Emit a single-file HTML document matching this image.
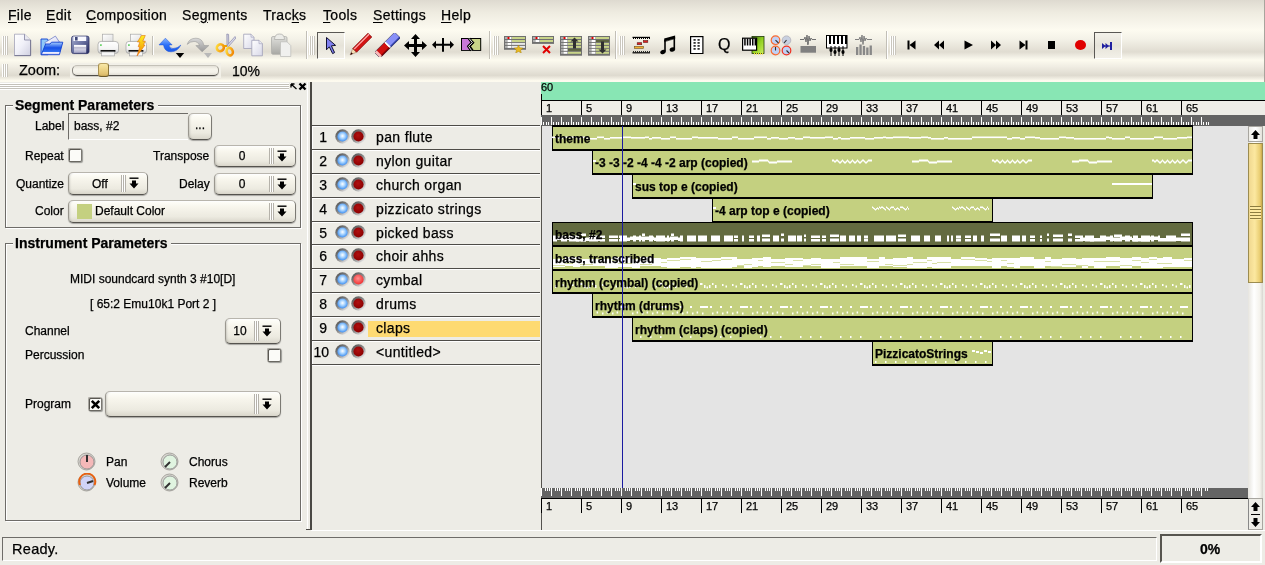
<!DOCTYPE html><html><head><meta charset="utf-8"><style>
*{box-sizing:border-box}
html,body{margin:0;padding:0}
body{width:1265px;height:565px;overflow:hidden;position:relative;background:#EDECE6;font-family:"Liberation Sans", sans-serif;color:#000}
.a{position:absolute}
.t{position:absolute;white-space:pre;line-height:1;will-change:transform;-webkit-text-stroke:0.25px currentColor}
.m{font-size:14px;letter-spacing:0.3px}
.u{text-decoration:underline;text-underline-offset:2px}
.lbl{font-size:12px}
.combo{position:absolute;border:1px solid;border-color:#B8B5AD #7C7A74 #55534E #9A978F;border-radius:5px;background:linear-gradient(#FFFFFA,#F7F5EC 30%,#ECEAE0 75%,#DAD7CC);box-shadow:0 1px 1px rgba(0,0,0,0.3), inset 2px 0 2px -1px rgba(0,0,0,0.15), inset 0 2px 1px -1px #FFF}
</style></head><body>

<div class="a" style="left:0;top:0;width:1265px;height:30px;background:linear-gradient(#DEDAD0,#EEEBE0 40%,#FAF8EE 90%,#FDFBF0)"></div>
<div class="a" style="left:0;top:30px;width:1265px;height:30px;background:linear-gradient(#FDFBF0,#F4F2E8 30%,#E0DCD1 73%,#F2F0E6 90%,#FDFBEF)"></div>
<div class="a" style="left:0;top:60px;width:1265px;height:22px;background:linear-gradient(#FDFBEF,#F0EDE3 30%,#DEDACF 70%,#F2EFE4 86%,#FFFCF0 95%,#FBF9EE)"></div>
<div class="a" style="left:1264px;top:0;width:1px;height:82px;background:#A8A59D"></div>
<div class="t m" style="left:8px;top:8px"><span class="u">F</span>ile</div>
<div class="t m" style="left:46px;top:8px"><span class="u">E</span>dit</div>
<div class="t m" style="left:86px;top:8px"><span class="u">C</span>omposition</div>
<div class="t m" style="left:182px;top:8px">Se<span class="u">g</span>ments</div>
<div class="t m" style="left:263px;top:8px">Trac<span class="u">k</span>s</div>
<div class="t m" style="left:323px;top:8px"><span class="u">T</span>ools</div>
<div class="t m" style="left:373px;top:8px"><span class="u">S</span>ettings</div>
<div class="t m" style="left:441px;top:8px"><span class="u">H</span>elp</div>
<div class="a" style="left:2px;top:36px;width:6px;height:19px;background:repeating-linear-gradient(90deg,#FFFFFF 0 1px,#C9C6BD 1px 2px)"></div>
<div class="a" style="left:309px;top:36px;width:6px;height:19px;background:repeating-linear-gradient(90deg,#FFFFFF 0 1px,#C9C6BD 1px 2px)"></div>
<div class="a" style="left:493px;top:36px;width:6px;height:19px;background:repeating-linear-gradient(90deg,#FFFFFF 0 1px,#C9C6BD 1px 2px)"></div>
<div class="a" style="left:619px;top:36px;width:6px;height:19px;background:repeating-linear-gradient(90deg,#FFFFFF 0 1px,#C9C6BD 1px 2px)"></div>
<div class="a" style="left:890px;top:36px;width:6px;height:19px;background:repeating-linear-gradient(90deg,#FFFFFF 0 1px,#C9C6BD 1px 2px)"></div>
<div class="a" style="left:2px;top:64px;width:6px;height:13px;background:repeating-linear-gradient(90deg,#FFFFFF 0 1px,#C9C6BD 1px 2px)"></div>
<div class="a" style="left:152px;top:36px;width:1px;height:19px;background:#C2BFB6"></div><div class="a" style="left:153px;top:36px;width:1px;height:19px;background:#FFFFFF"></div>
<div class="a" style="left:306px;top:31px;width:1px;height:28px;background:#C2BFB6"></div><div class="a" style="left:307px;top:31px;width:1px;height:28px;background:#FFFFFF"></div>
<div class="a" style="left:489px;top:31px;width:1px;height:28px;background:#C2BFB6"></div><div class="a" style="left:490px;top:31px;width:1px;height:28px;background:#FFFFFF"></div>
<div class="a" style="left:615px;top:31px;width:1px;height:28px;background:#C2BFB6"></div><div class="a" style="left:616px;top:31px;width:1px;height:28px;background:#FFFFFF"></div>
<div class="a" style="left:886px;top:31px;width:1px;height:28px;background:#C2BFB6"></div><div class="a" style="left:887px;top:31px;width:1px;height:28px;background:#FFFFFF"></div>
<svg class="a" style="left:13px;top:33px" width="19" height="24" viewBox="0 0 19 24"><defs><linearGradient id="gdoc" x1="0" y1="0" x2="1" y2="1"><stop offset="0" stop-color="#FFFFFF"/><stop offset="0.5" stop-color="#F0F0F8"/><stop offset="1" stop-color="#D0D0E0"/></linearGradient></defs><path d="M1.5 1.2 H11.5 L17.6 7 V22.6 H1.5 Z" fill="url(#gdoc)" stroke="#9898B0" stroke-width="0.7"/><path d="M17.6 7 V22.6 H1.5" fill="none" stroke="#70708C" stroke-width="0.9"/><path d="M11.5 1.2 V7 H17.6" fill="#E8E8F0" stroke="#8080A0" stroke-width="0.8"/></svg>
<svg class="a" style="left:40px;top:35px" width="24" height="21" viewBox="0 0 24 21"><defs><linearGradient id="gfo" x1="0" y1="0" x2="0" y2="1"><stop offset="0" stop-color="#A8D0FF"/><stop offset="0.45" stop-color="#1850E8"/><stop offset="0.75" stop-color="#3070F0"/><stop offset="0.8" stop-color="#F0F0FF"/><stop offset="1" stop-color="#C8C8F0"/></linearGradient><linearGradient id="gpp" x1="0" y1="0" x2="1" y2="1"><stop offset="0" stop-color="#FFFFFF"/><stop offset="1" stop-color="#D0D0F0"/></linearGradient></defs><path d="M1 4 H7.5 L8 5 V19.7 H1 Z" fill="#90C8F8" stroke="#1040D0" stroke-width="0.9"/><path d="M4.8 7.7 L15.4 1.1 L19.4 7 L9 13 Z" fill="url(#gpp)" stroke="#6070C0" stroke-width="0.7"/><path d="M1.3 19.7 L5.6 9 H10 L11.5 7.2 H22.8 L19.4 19.7 Z" fill="url(#gfo)" stroke="#1040D0" stroke-width="0.9"/></svg>
<svg class="a" style="left:71px;top:35px" width="19" height="20" viewBox="0 0 19 20"><defs><linearGradient id="gfl" x1="0" y1="0" x2="1" y2="1"><stop offset="0" stop-color="#A8B0D0"/><stop offset="0.5" stop-color="#6870A0"/><stop offset="1" stop-color="#20245A"/></linearGradient><linearGradient id="gfl2" x1="0" y1="0" x2="0" y2="1"><stop offset="0" stop-color="#FFFFFF"/><stop offset="1" stop-color="#A8A8C8"/></linearGradient></defs><rect x="0.6" y="1.1" width="17.4" height="17.5" rx="2" fill="url(#gfl)" stroke="#303468" stroke-width="0.8"/><rect x="2.4" y="1.5" width="12.8" height="4.5" fill="#F8F8FF"/><rect x="4" y="2" width="2.6" height="3.5" fill="#404878"/><rect x="3" y="9.9" width="12.2" height="7.9" fill="url(#gfl2)"/><rect x="3" y="12.5" width="12.2" height="0.8" fill="#9898B8"/></svg>
<svg class="a" style="left:97px;top:33px" width="23" height="24" viewBox="0 0 23 24"><defs><linearGradient id="gpr" x1="0" y1="0" x2="0" y2="1"><stop offset="0" stop-color="#FFFFFF"/><stop offset="0.6" stop-color="#F4F4F4"/><stop offset="1" stop-color="#C8C8C8"/></linearGradient><linearGradient id="gpa" x1="0" y1="0" x2="1" y2="1"><stop offset="0" stop-color="#FFFFFF"/><stop offset="1" stop-color="#E0E0E0"/></linearGradient></defs><rect x="5.6" y="1.2" width="10.4" height="7.6" fill="url(#gpa)" stroke="#A8A8A8" stroke-width="0.7"/><path d="M1 11.5 Q1 8.4 4 8.4 H18 Q21.5 8.4 21.5 11.5 V17.5 Q21.5 20.4 18.5 20.4 H4 Q1 20.4 1 17.5 Z" fill="url(#gpr)" stroke="#A0A0A0" stroke-width="0.7"/><rect x="3" y="11.3" width="1.8" height="1.6" fill="#60D060"/><rect x="3.4" y="17" width="15.2" height="1.9" rx="0.8" fill="#101010"/><rect x="4.6" y="18.9" width="13" height="4" fill="#F6F6F6" stroke="#A8A8A8" stroke-width="0.7"/></svg>
<svg class="a" style="left:125px;top:33px" width="23" height="24" viewBox="0 0 23 24"><defs><linearGradient id="gpr" x1="0" y1="0" x2="0" y2="1"><stop offset="0" stop-color="#FFFFFF"/><stop offset="0.6" stop-color="#F4F4F4"/><stop offset="1" stop-color="#C8C8C8"/></linearGradient><linearGradient id="gpa" x1="0" y1="0" x2="1" y2="1"><stop offset="0" stop-color="#FFFFFF"/><stop offset="1" stop-color="#E0E0E0"/></linearGradient></defs><rect x="5.6" y="1.2" width="10.4" height="7.6" fill="url(#gpa)" stroke="#A8A8A8" stroke-width="0.7"/><path d="M1 11.5 Q1 8.4 4 8.4 H18 Q21.5 8.4 21.5 11.5 V17.5 Q21.5 20.4 18.5 20.4 H4 Q1 20.4 1 17.5 Z" fill="url(#gpr)" stroke="#A0A0A0" stroke-width="0.7"/><rect x="3" y="11.3" width="1.8" height="1.6" fill="#60D060"/><rect x="3.4" y="17" width="15.2" height="1.9" rx="0.8" fill="#101010"/><rect x="4.6" y="18.9" width="13" height="4" fill="#F6F6F6" stroke="#A8A8A8" stroke-width="0.7"/></svg>
<svg class="a" style="left:136px;top:35px" width="10" height="22" viewBox="0 0 10 22"><defs><linearGradient id="glt" x1="0" y1="0" x2="0" y2="1"><stop offset="0" stop-color="#FFF020"/><stop offset="1" stop-color="#F08000"/></linearGradient></defs><path d="M5.5 0.5 H9.3 L6.8 6.2 H9.3 L7.4 10 H9 L1 21 L3.8 11.8 H2.2 L3.8 7 H1.4 Z" fill="url(#glt)" stroke="#E07010" stroke-width="0.6"/></svg>
<svg class="a" style="left:155px;top:32px" width="60" height="28" viewBox="0 0 60 28"><defs><linearGradient id="gu" x1="0" y1="0" x2="0" y2="1"><stop offset="0" stop-color="#8CB8FF"/><stop offset="0.5" stop-color="#2C70F8"/><stop offset="1" stop-color="#1858E8"/></linearGradient><linearGradient id="gr" x1="0" y1="0" x2="0" y2="1"><stop offset="0" stop-color="#D8D8D8"/><stop offset="1" stop-color="#989898"/></linearGradient></defs><path d="M4 12.9 L10.4 6.2 L17.1 12.9 H14 Q14.5 16.5 18 16.5 Q22.5 16.5 25.8 13.1 Q22.5 19.8 16 19.8 Q9.5 19.8 8.5 12.9 Z" fill="url(#gu)" stroke="#1A50D8" stroke-width="0.5"/><path d="M20.8 21 H29.2 L25 26 Z" fill="#000"/><path d="M32.2 12.4 Q34 6.2 41 6.2 Q47.5 6.2 49 13.6 H53.8 L47.1 19.8 L40.9 13.6 H44.5 Q43 9.5 39 9.5 Q35 9.5 32.2 12.4 Z" fill="url(#gr)" stroke="#909090" stroke-width="0.5"/><path d="M49 21 H57 L53 26 Z" fill="#B8B8B8"/></svg>
<svg class="a" style="left:212px;top:32px" width="24" height="25" viewBox="0 0 24 25"><defs><linearGradient id="gsc" x1="0" y1="0" x2="1" y2="1"><stop offset="0" stop-color="#FFE040"/><stop offset="1" stop-color="#F08000"/></linearGradient></defs><path d="M14.8 2 L16.6 2.4 L16.8 13.5 L15 14 Z" fill="#D0D0E0" stroke="#7878A0" stroke-width="0.6"/><path d="M23 4.5 L24 6 L16.5 14.5 L15 13.5 Z" fill="#D8D8E8" stroke="#7878A0" stroke-width="0.6"/><ellipse cx="8.3" cy="15.7" rx="3.6" ry="3.3" fill="none" stroke="url(#gsc)" stroke-width="2.6" transform="rotate(-30 8.3 15.7)"/><ellipse cx="17.7" cy="19.6" rx="3" ry="3.8" fill="none" stroke="url(#gsc)" stroke-width="2.6" transform="rotate(-20 17.7 19.6)"/><path d="M11 14 L15 14" stroke="#F0A000" stroke-width="2"/></svg>
<svg class="a" style="left:243px;top:33px" width="22" height="24" viewBox="0 0 22 24"><defs><linearGradient id="gcp" x1="0" y1="0" x2="1" y2="1"><stop offset="0" stop-color="#FFFFFF"/><stop offset="1" stop-color="#D8D8E8"/></linearGradient></defs><path d="M0.7 1.2 H8 L11 4.2 V15.5 H0.7 Z" fill="url(#gcp)" stroke="#A0A0B8" stroke-width="0.8"/><path d="M8.8 7.3 H16 L19.4 10.7 V22.8 H8.8 Z" fill="url(#gcp)" stroke="#A0A0B8" stroke-width="0.8"/><path d="M16 7.3 V10.7 H19.4" fill="#E8E8F0" stroke="#A0A0B8" stroke-width="0.6"/><path d="M8 1.2 V4.2 H11" fill="#E8E8F0" stroke="#A0A0B8" stroke-width="0.6"/></svg>
<svg class="a" style="left:271px;top:33px" width="22" height="24" viewBox="0 0 22 24"><defs><linearGradient id="gps" x1="0" y1="0" x2="0" y2="1"><stop offset="0" stop-color="#E0E0DC"/><stop offset="1" stop-color="#A8A8A4"/></linearGradient></defs><rect x="0.5" y="3.5" width="15.5" height="17.8" rx="1.5" fill="url(#gps)" stroke="#B0B0AC" stroke-width="0.8"/><path d="M3.5 6.5 Q3.5 1 8.5 1 Q13.5 1 13.5 6.5 Z" fill="#ECECE8" stroke="#B0B0AC" stroke-width="0.8"/><path d="M9.5 8.8 H16 L19.8 12.6 V23.5 H9.5 Z" fill="#F0F0EE" stroke="#C0C0BC" stroke-width="0.8"/></svg>
<div class="a" style="left:317px;top:32px;width:28px;height:27px;border:1px solid;border-color:#5A5854 #FFFFFF #FFFFFF #5A5854;background:linear-gradient(#F4F2EA,#E6E3D9 50%,#F2F0E8)"></div>
<svg class="a" style="left:325px;top:36px" width="12" height="19" viewBox="0 0 12 19"><path d="M1.5 1.5 V13.8 L4.3 10.8 L7.6 17.6 L9.6 16.6 L6.4 9.8 L10.6 9.4 Z" fill="#8080F0" stroke="#101030" stroke-width="1"/></svg>
<svg class="a" style="left:348px;top:33px" width="24" height="24" viewBox="0 0 24 24"><g transform="rotate(-45 12 12)"><path d="M-2 12 L4.5 9.3 V14.7 Z" fill="#F4DCB4" stroke="#806040" stroke-width="0.4"/><path d="M-2 12 L0.8 10.9 V13.1 Z" fill="#300000"/><rect x="4.5" y="9.3" width="21.5" height="5.4" fill="#D41414" stroke="#700000" stroke-width="0.6"/><rect x="5" y="10.2" width="21" height="1.2" fill="#FFB0B0"/></g></svg>
<svg class="a" style="left:375px;top:33px" width="25" height="24" viewBox="0 0 25 24"><g transform="rotate(-45 12.5 12)"><rect x="-2" y="8" width="3" height="8" fill="#F8B8B8"/><rect x="1" y="8" width="11" height="8" fill="#D01010"/><rect x="12" y="8" width="1.6" height="8" fill="#FFFFFF"/><rect x="13.6" y="8" width="13" height="8" fill="#8890F8"/><rect x="13.6" y="14.5" width="13" height="1.5" fill="#3040A8"/><rect x="1" y="14.5" width="11" height="1.5" fill="#800000"/><rect x="-2" y="8" width="28.6" height="8" fill="none" stroke="#202040" stroke-width="0.5"/></g></svg>
<svg class="a" style="left:404px;top:34px" width="23" height="23" viewBox="0 0 23 23"><path d="M11.5 0 L16 5 H13 V10 H18 V7 L23 11.5 L18 16 V13 H13 V18 H16 L11.5 23 L7 18 H10 V13 H5 V16 L0 11.5 L5 7 V10 H10 V5 H7 Z" fill="#000"/></svg>
<svg class="a" style="left:428px;top:33px" width="30" height="22" viewBox="0 0 30 22"><path d="M4 11.8 L8 7.8 V10.8 H14 V5 H16 V10.8 H22 V7.8 L26 11.8 L22 15.8 V12.8 H16 V18.8 H14 V12.8 H8 V15.8 Z" fill="#000"/></svg>
<svg class="a" style="left:460px;top:37px" width="23" height="16" viewBox="0 0 23 16"><path d="M1 1 H21.2 V13.9 H1 Z" fill="#000"/><path d="M2 2 H7.9 L10.9 5.6 L7.2 9.3 L10 12.9 H2 Z" fill="#C878D8"/><path d="M9.9 2 H20.2 V12.9 H13.6 L10.9 9.3 L14.6 5.6 Z" fill="#C8D488"/><path d="M9.1 1.5 L12.3 5.6 L8.6 9.3 L11.4 13.4" fill="none" stroke="#000" stroke-width="2.8"/><path d="M9.1 1.5 L12.3 5.6 L8.6 9.3 L11.4 13.4" fill="none" stroke="#FFF" stroke-width="0.9"/></svg>
<svg class="a" style="left:504px;top:36px" width="22" height="14" viewBox="0 0 22 14"><rect x="0" y="0" width="22" height="13.8" fill="#707070"/><rect x="1" y="1.0" width="2.5" height="2" fill="#B0B0B0"/><rect x="3.5" y="1.0" width="4" height="2" fill="#FFFFFF"/><rect x="8" y="1.0" width="13" height="2" fill="#C8D488"/><rect x="1" y="4.0" width="2.5" height="2" fill="#B0B0B0"/><rect x="3.5" y="4.0" width="4" height="2" fill="#FFFFFF"/><rect x="8" y="4.0" width="13" height="2" fill="#C8D488"/><rect x="1" y="6.9" width="2.5" height="2" fill="#B0B0B0"/><rect x="3.5" y="6.9" width="4" height="2" fill="#FFFFFF"/><rect x="8" y="6.9" width="13" height="2" fill="#E8E8E8"/><rect x="1" y="9.9" width="2.5" height="2" fill="#B0B0B0"/><rect x="3.5" y="9.9" width="4" height="2" fill="#FFFFFF"/><rect x="8" y="9.9" width="13" height="2" fill="#E8E8E8"/><rect x="3.5" y="1" width="2" height="2" fill="#E00000"/></svg>
<svg class="a" style="left:514px;top:45px" width="9" height="8" viewBox="0 0 9 8"><path d="M4.5 0 L5.8 2.8 L9 3.1 L6.6 5.1 L7.3 8 L4.5 6.5 L1.7 8 L2.4 5.1 L0 3.1 L3.2 2.8 Z" fill="#E8B820" stroke="#A07800" stroke-width="0.4"/></svg>
<svg class="a" style="left:532px;top:36px" width="22" height="8" viewBox="0 0 22 8"><rect x="0" y="0" width="22" height="7.9" fill="#707070"/><rect x="1" y="1.0" width="2.5" height="2" fill="#B0B0B0"/><rect x="3.5" y="1.0" width="4" height="2" fill="#FFFFFF"/><rect x="8" y="1.0" width="13" height="2" fill="#C8D488"/><rect x="1" y="4.0" width="2.5" height="2" fill="#B0B0B0"/><rect x="3.5" y="4.0" width="4" height="2" fill="#FFFFFF"/><rect x="8" y="4.0" width="13" height="2" fill="#C8D488"/><rect x="3.5" y="1" width="2" height="2" fill="#E00000"/></svg>
<svg class="a" style="left:542px;top:45px" width="9" height="9" viewBox="0 0 9 9"><path d="M1 1 L8 8 M8 1 L1 8" stroke="#E00000" stroke-width="2"/></svg>
<svg class="a" style="left:560px;top:36px" width="22" height="20" viewBox="0 0 22 20"><rect x="0" y="0" width="22" height="19.7" fill="#707070"/><rect x="1" y="1.0" width="2.5" height="2" fill="#B0B0B0"/><rect x="3.5" y="1.0" width="4" height="2" fill="#FFFFFF"/><rect x="8" y="1.0" width="13" height="2" fill="#C8D488"/><rect x="1" y="4.0" width="2.5" height="2" fill="#B0B0B0"/><rect x="3.5" y="4.0" width="4" height="2" fill="#FFFFFF"/><rect x="8" y="4.0" width="13" height="2" fill="#C8D488"/><rect x="1" y="6.9" width="2.5" height="2" fill="#B0B0B0"/><rect x="3.5" y="6.9" width="4" height="2" fill="#FFFFFF"/><rect x="8" y="6.9" width="13" height="2" fill="#C8D488"/><rect x="1" y="9.9" width="2.5" height="2" fill="#B0B0B0"/><rect x="3.5" y="9.9" width="4" height="2" fill="#FFFFFF"/><rect x="8" y="9.9" width="13" height="2" fill="#C8D488"/><rect x="1" y="12.8" width="2.5" height="2" fill="#B0B0B0"/><rect x="3.5" y="12.8" width="4" height="2" fill="#FFFFFF"/><rect x="8" y="12.8" width="13" height="2" fill="#5C6440"/><rect x="1" y="15.8" width="2.5" height="2" fill="#B0B0B0"/><rect x="3.5" y="15.8" width="4" height="2" fill="#FFFFFF"/><rect x="8" y="15.8" width="13" height="2" fill="#C8D488"/><rect x="3.5" y="1" width="2" height="2" fill="#E00000"/></svg>
<svg class="a" style="left:570px;top:37px" width="9" height="12" viewBox="0 0 9 12"><path d="M4.5 0.5 L8.5 4.5 H6 V11.5 H3 V4.5 H0.5 Z" fill="#303030"/></svg>
<svg class="a" style="left:588px;top:36px" width="22" height="20" viewBox="0 0 22 20"><rect x="0" y="0" width="22" height="19.7" fill="#707070"/><rect x="1" y="1.0" width="2.5" height="2" fill="#B0B0B0"/><rect x="3.5" y="1.0" width="4" height="2" fill="#FFFFFF"/><rect x="8" y="1.0" width="13" height="2" fill="#C8D488"/><rect x="1" y="4.0" width="2.5" height="2" fill="#B0B0B0"/><rect x="3.5" y="4.0" width="4" height="2" fill="#FFFFFF"/><rect x="8" y="4.0" width="13" height="2" fill="#5C6440"/><rect x="1" y="6.9" width="2.5" height="2" fill="#B0B0B0"/><rect x="3.5" y="6.9" width="4" height="2" fill="#FFFFFF"/><rect x="8" y="6.9" width="13" height="2" fill="#C8D488"/><rect x="1" y="9.9" width="2.5" height="2" fill="#B0B0B0"/><rect x="3.5" y="9.9" width="4" height="2" fill="#FFFFFF"/><rect x="8" y="9.9" width="13" height="2" fill="#C8D488"/><rect x="1" y="12.8" width="2.5" height="2" fill="#B0B0B0"/><rect x="3.5" y="12.8" width="4" height="2" fill="#FFFFFF"/><rect x="8" y="12.8" width="13" height="2" fill="#C8D488"/><rect x="1" y="15.8" width="2.5" height="2" fill="#B0B0B0"/><rect x="3.5" y="15.8" width="4" height="2" fill="#FFFFFF"/><rect x="8" y="15.8" width="13" height="2" fill="#C8D488"/><rect x="3.5" y="1" width="2" height="2" fill="#E00000"/></svg>
<svg class="a" style="left:598px;top:41px" width="9" height="13" viewBox="0 0 9 13"><path d="M4.5 12.5 L8.5 8.5 H6 V0.5 H3 V8.5 H0.5 Z" fill="#303030"/></svg>
<svg class="a" style="left:632px;top:36px" width="19" height="18" viewBox="0 0 19 18"><rect x="0.5" y="0.8" width="17.5" height="1.2" fill="#000"/><rect x="1" y="2" width="1" height="1" fill="#000"/><rect x="3" y="2" width="1" height="1" fill="#000"/><rect x="5" y="2" width="1" height="1" fill="#000"/><rect x="7" y="2" width="1" height="1" fill="#000"/><rect x="9" y="2" width="1" height="1" fill="#000"/><rect x="11" y="2" width="1" height="1" fill="#000"/><rect x="13" y="2" width="1" height="1" fill="#000"/><rect x="15" y="2" width="1" height="1" fill="#000"/><rect x="17" y="2" width="1" height="1" fill="#000"/><rect x="0.5" y="16.2" width="17.5" height="1.2" fill="#000"/><rect x="1" y="15.2" width="1" height="1" fill="#000"/><rect x="3" y="15.2" width="1" height="1" fill="#000"/><rect x="5" y="15.2" width="1" height="1" fill="#000"/><rect x="7" y="15.2" width="1" height="1" fill="#000"/><rect x="9" y="15.2" width="1" height="1" fill="#000"/><rect x="11" y="15.2" width="1" height="1" fill="#000"/><rect x="13" y="15.2" width="1" height="1" fill="#000"/><rect x="15" y="15.2" width="1" height="1" fill="#000"/><rect x="17" y="15.2" width="1" height="1" fill="#000"/><rect x="11.3" y="4.5" width="4.5" height="2" fill="#E02020" stroke="#602020" stroke-width="0.6"/><rect x="5.2" y="6.7" width="4.5" height="2" fill="#E02020" stroke="#602020" stroke-width="0.6"/><rect x="2.4" y="10.4" width="9.2" height="2" fill="#F0B030" stroke="#705020" stroke-width="0.6"/></svg>
<svg class="a" style="left:660px;top:35px" width="17" height="20" viewBox="0 0 17 20"><path d="M5 5 V16.5 M14.3 2 V14" stroke="#000" stroke-width="1.6"/><path d="M4.2 3.6 L15.1 0.4 V3.4 L4.2 6.6 Z" fill="#000"/><path d="M4.2 6.8 L15.1 3.6" stroke="#000" stroke-width="0.6"/><ellipse cx="3" cy="17" rx="2.8" ry="2.1" fill="#000" transform="rotate(-20 3 17)"/><ellipse cx="12.4" cy="14.5" rx="2.8" ry="2.1" fill="#000" transform="rotate(-20 12.4 14.5)"/></svg>
<svg class="a" style="left:690px;top:36px" width="14" height="18" viewBox="0 0 14 18"><rect x="0.6" y="0.6" width="12.3" height="17" fill="#FFF" stroke="#000" stroke-width="1.2"/><rect x="3.5" y="3" width="2.2" height="1.8" fill="#333"/><rect x="7.5" y="3" width="2.2" height="1.8" fill="#333"/><rect x="3.5" y="6" width="2.2" height="1.8" fill="#333"/><rect x="7.5" y="6" width="2.2" height="1.8" fill="#333"/><rect x="3.5" y="9" width="2.2" height="1.8" fill="#333"/><rect x="7.5" y="9" width="2.2" height="1.8" fill="#333"/><rect x="3.5" y="12" width="2.2" height="1.8" fill="#333"/><rect x="7.5" y="12" width="2.2" height="1.8" fill="#333"/></svg>
<div class="t" style="left:718px;top:37px;font-size:16px;font-weight:400">Q</div>
<svg class="a" style="left:742px;top:36px" width="23" height="19" viewBox="0 0 23 19"><defs><linearGradient id="gpb" x1="0" y1="0" x2="1" y2="1"><stop offset="0" stop-color="#407010"/><stop offset="0.5" stop-color="#90D020"/><stop offset="1" stop-color="#D0F060"/></linearGradient></defs><rect x="10" y="0.5" width="12" height="17" fill="url(#gpb)" stroke="#203808" stroke-width="0.8"/><rect x="0.6" y="2.2" width="14" height="12" fill="#FFF" stroke="#000" stroke-width="1.2"/><rect x="2.2" y="2.5" width="1.5" height="7" fill="#000"/><rect x="4.800000000000001" y="2.5" width="1.5" height="7" fill="#000"/><rect x="7.4" y="2.5" width="1.5" height="7" fill="#000"/><rect x="10.0" y="2.5" width="1.5" height="7" fill="#000"/><rect x="12.600000000000001" y="2.5" width="1.5" height="7" fill="#000"/><rect x="12" y="17" width="1" height="1.5" fill="#F0E020"/><rect x="14" y="17" width="1" height="1.5" fill="#F0E020"/><rect x="16" y="17" width="1" height="1.5" fill="#F0E020"/><rect x="18" y="17" width="1" height="1.5" fill="#F0E020"/><rect x="20" y="17" width="1" height="1.5" fill="#F0E020"/></svg>
<svg class="a" style="left:770px;top:35px" width="23" height="21" viewBox="0 0 23 21"><circle cx="5.5" cy="5.2" r="4.3" fill="#C0D0F4" stroke="#F86A30" stroke-width="1.2"/><circle cx="16.5" cy="5.2" r="4.3" fill="#C8D0E0" stroke="#B8B8C0" stroke-width="1"/><circle cx="5.5" cy="15.5" r="4.3" fill="#C0D0F4" stroke="#F86A30" stroke-width="1.2"/><circle cx="16.5" cy="15.5" r="4.3" fill="#C0D0F4" stroke="#F03020" stroke-width="1.2"/><path d="M5.5 5.2 L8.5 8 M16.5 5.2 L14 8 M5.5 15.5 L5.5 12 M16.5 15.5 L19 18" stroke="#303030" stroke-width="1.1"/></svg>
<svg class="a" style="left:800px;top:34px" width="17" height="20" viewBox="0 0 17 20"><path d="M0 5.5 H4 L5 3 L6 8 L7 1 L8 10.5 L9 2 L10 7 L11 4 L12 5.5 H16" fill="none" stroke="#707070" stroke-width="1"/><rect x="7.3" y="8" width="1" height="3" fill="#707070"/><rect x="0.5" y="12" width="15.5" height="6.7" fill="#808080"/></svg>
<svg class="a" style="left:826px;top:35px" width="22" height="21" viewBox="0 0 22 21"><rect x="0.5" y="0.5" width="20.5" height="12.5" fill="#FFF" stroke="#000"/><rect x="3" y="1" width="2" height="8" fill="#000"/><rect x="7" y="1" width="2" height="8" fill="#000"/><rect x="11" y="1" width="2" height="8" fill="#000"/><rect x="15" y="1" width="2" height="8" fill="#000"/><rect x="19" y="1" width="2" height="8" fill="#000"/><rect x="4.5" y="11" width="1" height="10" fill="#000"/><ellipse cx="5" cy="15" rx="1.6" ry="2" fill="#000"/><rect x="8.5" y="11" width="1" height="10" fill="#000"/><ellipse cx="9" cy="17" rx="1.6" ry="2" fill="#000"/><rect x="12.5" y="11" width="1" height="10" fill="#000"/><ellipse cx="13" cy="15" rx="1.6" ry="2" fill="#000"/><rect x="16.5" y="11" width="1" height="10" fill="#000"/><ellipse cx="17" cy="17" rx="1.6" ry="2" fill="#000"/></svg>
<svg class="a" style="left:855px;top:34px" width="18" height="22" viewBox="0 0 18 22"><path d="M0 5.5 H4 L5 3 L6 8 L7 1 L8 10.5 L9 2 L10 7 L11 4 L12 5.5 H17" fill="none" stroke="#808080" stroke-width="1"/><rect x="1.0" y="13" width="2.3" height="8" fill="#888"/><rect x="4.4" y="10.5" width="2.3" height="10.5" fill="#888"/><rect x="7.8" y="12" width="2.3" height="9" fill="#888"/><rect x="11.2" y="13.5" width="2.3" height="7.5" fill="#888"/><rect x="14.6" y="11.5" width="2.3" height="9.5" fill="#888"/></svg>
<svg class="a" style="left:907px;top:40px" width="9" height="10" viewBox="0 0 9 10"><rect x="0.5" y="0.5" width="2" height="9" fill="#000"/><path d="M8.5 0.5 V9.5 L2.5 5 Z" fill="#000"/></svg>
<svg class="a" style="left:934px;top:40px" width="10" height="10" viewBox="0 0 10 10"><path d="M5 0.5 V9.5 L0 5 Z M10 0.5 V9.5 L5 5 Z" fill="#000"/></svg>
<svg class="a" style="left:964px;top:40px" width="9" height="10" viewBox="0 0 9 10"><path d="M0.5 0.5 V9.5 L9 5 Z" fill="#000"/></svg>
<svg class="a" style="left:991px;top:40px" width="10" height="10" viewBox="0 0 10 10"><path d="M0 0.5 V9.5 L5 5 Z M5 0.5 V9.5 L10 5 Z" fill="#000"/></svg>
<svg class="a" style="left:1019px;top:40px" width="9" height="10" viewBox="0 0 9 10"><path d="M0.5 0.5 V9.5 L6.5 5 Z" fill="#000"/><rect x="6.5" y="0.5" width="2" height="9" fill="#000"/></svg>
<div class="a" style="left:1048px;top:41px;width:7px;height:8px;background:#000"></div>
<div class="a" style="left:1075px;top:40px;width:11px;height:10px;border-radius:50%;background:#E00000"></div>
<div class="a" style="left:1094px;top:32px;width:28px;height:27px;border:1px solid;border-color:#5A5854 #FFFFFF #FFFFFF #5A5854;background:linear-gradient(#F4F2EA,#E6E3D9 50%,#F2F0E8)"></div>
<svg class="a" style="left:1102px;top:42px" width="11" height="8" viewBox="0 0 11 8"><path d="M0 1 V7 L3.5 4 Z M3.5 1 V7 L7 4 Z" fill="#2020A0"/><rect x="0" y="3.5" width="8" height="1" fill="#2020A0"/><rect x="8" y="0" width="2" height="8" fill="#2020A0"/></svg>
<div class="t" style="left:19px;top:63px;font-size:14.5px">Zoom:</div>
<div class="a" style="left:70px;top:63px;width:151px;height:15px;background:#F2F0E8"></div>
<div class="a" style="left:72px;top:65px;width:147px;height:11px;border:1px solid;border-color:#C4C1B8 #9A978F #4E4C48 #8A8780;border-radius:5px;background:linear-gradient(#E4E1D8,#F6F4EC 35%,#F3F1E9 70%,#E0DDD4);box-shadow:0 1px 0 rgba(0,0,0,0.15)"></div>
<div class="a" style="left:98px;top:63px;width:11px;height:14px;border:1px solid;border-color:#B8A060 #8A7438 #6A5828 #A89050;border-radius:3px;background:linear-gradient(#F8E8A8,#EED68A 40%,#E0C070 85%,#C8A858)"></div>
<div class="t" style="left:232px;top:64px;font-size:14px">10%</div>
<div class="a" style="left:0;top:83px;width:289px;height:7px;background:repeating-linear-gradient(#FFFFFF 0 1px,#C4C1B9 1px 2px)"></div>
<svg class="a" style="left:290px;top:83px" width="8" height="7" viewBox="0 0 8 7"><path d="M1 1 H4.5 M1 1 V4.5 M1 1 L6.5 6" stroke="#000" stroke-width="1.3" fill="none"/></svg>
<svg class="a" style="left:298px;top:82px" width="9" height="9" viewBox="0 0 9 9"><path d="M1.5 1.5 L7.5 7.5 M7.5 1.5 L1.5 7.5" stroke="#000" stroke-width="2.4"/></svg>
<div class="a" style="left:307px;top:82px;width:1px;height:448px;background:#FFFFFF"></div>
<div class="a" style="left:310px;top:82px;width:2px;height:448px;background:#4A4844"></div>
<div class="a" style="left:306px;top:529px;width:5px;height:1px;background:#4A4844"></div>
<div class="a" style="left:5px;top:105px;width:296px;height:123px;border:1px solid #6E6C68;box-shadow:1px 1px 0 #FFFFFF, inset 1px 1px 0 #FFFFFF"></div>
<div class="a" style="left:13px;top:97px;width:145px;height:16px;background:#EDECE6"></div>
<div class="t" style="left:15px;top:98px;font-size:14px;font-weight:700">Segment Parameters</div>
<div class="a" style="left:5px;top:243px;width:296px;height:278px;border:1px solid #6E6C68;box-shadow:1px 1px 0 #FFFFFF, inset 1px 1px 0 #FFFFFF"></div>
<div class="a" style="left:13px;top:235px;width:158px;height:16px;background:#EDECE6"></div>
<div class="t" style="left:15px;top:236px;font-size:14px;font-weight:700">Instrument Parameters</div>
<div class="t lbl" style="left:35px;top:120px">Label</div>
<div class="a" style="left:68px;top:113px;width:120px;height:27px;border-left:1px solid #6E6C68;border-top:1px solid #6E6C68;border-bottom:1px solid #FFFFFF;background:#EDECE6"></div>
<div class="t lbl" style="left:74px;top:120px">bass, #2</div>
<div class="combo" style="left:188px;top:113px;width:24px;height:27px"></div>
<div class="t lbl" style="left:195px;top:119px">...</div>
<div class="t lbl" style="left:25px;top:150px">Repeat</div>
<div class="a" style="left:68px;top:148px;width:14px;height:14px;border:1px solid;border-color:#A8A6A0 #7A7872 #6A6862 #A8A6A0;border-radius:2px;background:#FBFBF8;box-shadow:1px 1px 1px rgba(0,0,0,0.35), inset 1px 1px 0 #5A5852"></div>
<div class="t lbl" style="left:153px;top:150px">Transpose</div>
<div class="combo" style="left:214px;top:145px;width:82px;height:22px"></div>
<div class="a" style="left:269px;top:148px;width:5px;height:16px;background:repeating-linear-gradient(90deg,#B5B2AA 0 1px,#FFF 1px 2px)"></div>
<svg class="a" style="left:277px;top:150px" width="10" height="12" viewBox="0 0 10 12"><rect x="0.5" y="0.5" width="9" height="1.4" fill="#000"/><path d="M5 11.5 L9.5 6.5 H7 V3.5 H3 V6.5 H0.5 Z" fill="#000"/></svg>
<div class="t lbl" style="left:214px;width:56px;text-align:center;top:150px">0</div>
<div class="t lbl" style="left:16px;top:178px">Quantize</div>
<div class="combo" style="left:68px;top:172px;width:80px;height:23px"></div>
<div class="a" style="left:121px;top:175px;width:5px;height:17px;background:repeating-linear-gradient(90deg,#B5B2AA 0 1px,#FFF 1px 2px)"></div>
<svg class="a" style="left:129px;top:177px" width="10" height="12" viewBox="0 0 10 12"><rect x="0.5" y="0.5" width="9" height="1.4" fill="#000"/><path d="M5 11.5 L9.5 6.5 H7 V3.5 H3 V6.5 H0.5 Z" fill="#000"/></svg>
<div class="t lbl" style="left:92px;top:178px">Off</div>
<div class="t lbl" style="left:179px;top:178px">Delay</div>
<div class="combo" style="left:214px;top:173px;width:82px;height:22px"></div>
<div class="a" style="left:269px;top:176px;width:5px;height:16px;background:repeating-linear-gradient(90deg,#B5B2AA 0 1px,#FFF 1px 2px)"></div>
<svg class="a" style="left:277px;top:178px" width="10" height="12" viewBox="0 0 10 12"><rect x="0.5" y="0.5" width="9" height="1.4" fill="#000"/><path d="M5 11.5 L9.5 6.5 H7 V3.5 H3 V6.5 H0.5 Z" fill="#000"/></svg>
<div class="t lbl" style="left:214px;width:56px;text-align:center;top:178px">0</div>
<div class="t lbl" style="left:35px;top:205px">Color</div>
<div class="combo" style="left:68px;top:200px;width:228px;height:23px"></div>
<div class="a" style="left:269px;top:203px;width:5px;height:17px;background:repeating-linear-gradient(90deg,#B5B2AA 0 1px,#FFF 1px 2px)"></div>
<svg class="a" style="left:277px;top:205px" width="10" height="12" viewBox="0 0 10 12"><rect x="0.5" y="0.5" width="9" height="1.4" fill="#000"/><path d="M5 11.5 L9.5 6.5 H7 V3.5 H3 V6.5 H0.5 Z" fill="#000"/></svg>
<div class="a" style="left:77px;top:204px;width:15px;height:15px;background:#C4D080"></div>
<div class="t lbl" style="left:95px;top:205px">Default Color</div>
<div class="t lbl" style="left:70px;top:273px">MIDI soundcard synth 3 #10[D]</div>
<div class="t lbl" style="left:90px;top:298px">[ 65:2 Emu10k1 Port 2 ]</div>
<div class="t lbl" style="left:25px;top:325px">Channel</div>
<div class="combo" style="left:225px;top:318px;width:56px;height:26px"></div>
<div class="a" style="left:254px;top:321px;width:5px;height:20px;background:repeating-linear-gradient(90deg,#B5B2AA 0 1px,#FFF 1px 2px)"></div>
<svg class="a" style="left:262px;top:325px" width="10" height="12" viewBox="0 0 10 12"><rect x="0.5" y="0.5" width="9" height="1.4" fill="#000"/><path d="M5 11.5 L9.5 6.5 H7 V3.5 H3 V6.5 H0.5 Z" fill="#000"/></svg>
<div class="t lbl" style="left:225px;width:30px;text-align:center;top:325px">10</div>
<div class="t lbl" style="left:25px;top:349px">Percussion</div>
<div class="a" style="left:267px;top:348px;width:14px;height:14px;border:1px solid;border-color:#A8A6A0 #7A7872 #6A6862 #A8A6A0;border-radius:2px;background:#FBFBF8;box-shadow:1px 1px 1px rgba(0,0,0,0.35), inset 1px 1px 0 #5A5852"></div>
<div class="t lbl" style="left:25px;top:398px">Program</div>
<div class="a" style="left:88px;top:397px;width:14px;height:14px;border:1px solid;border-color:#A8A6A0 #7A7872 #6A6862 #A8A6A0;border-radius:2px;background:#FBFBF8;box-shadow:1px 1px 1px rgba(0,0,0,0.35), inset 1px 1px 0 #5A5852"></div>
<svg class="a" style="left:90px;top:399px" width="11" height="11" viewBox="0 0 11 11"><path d="M1.8 1.8 L9.2 9.2 M9.2 1.8 L1.8 9.2" stroke="#000" stroke-width="2.6"/></svg>
<div class="combo" style="left:105px;top:391px;width:176px;height:26px"></div>
<div class="a" style="left:254px;top:394px;width:5px;height:20px;background:repeating-linear-gradient(90deg,#B5B2AA 0 1px,#FFF 1px 2px)"></div>
<svg class="a" style="left:262px;top:398px" width="10" height="12" viewBox="0 0 10 12"><rect x="0.5" y="0.5" width="9" height="1.4" fill="#000"/><path d="M5 11.5 L9.5 6.5 H7 V3.5 H3 V6.5 H0.5 Z" fill="#000"/></svg>
<svg class="a" style="left:77px;top:452px" width="20" height="19" viewBox="0 0 20 19"><circle cx="9.5" cy="9.5" r="8.5" fill="#D8D6D0" stroke="#A8A6A0" stroke-width="1"/><circle cx="10" cy="10" r="7" fill="#F4B8B8" stroke="#888" stroke-width="0.8"/><path d="M10 10 V3" stroke="#303030" stroke-width="2"/></svg>
<svg class="a" style="left:77px;top:473px" width="20" height="19" viewBox="0 0 20 19"><circle cx="9.5" cy="9.5" r="8.5" fill="#D8D6D0" stroke="#A8A6A0" stroke-width="1"/><circle cx="10" cy="10" r="7" fill="#D0D4F8" stroke="#888" stroke-width="0.8"/><path d="M3 12 A8 8 0 1 1 17.5 12" fill="none" stroke="#E86010" stroke-width="2"/><path d="M10 10 L16 8" stroke="#303030" stroke-width="2"/></svg>
<svg class="a" style="left:160px;top:452px" width="20" height="19" viewBox="0 0 20 19"><circle cx="9.5" cy="9.5" r="8.5" fill="#D8D6D0" stroke="#A8A6A0" stroke-width="1"/><circle cx="10" cy="10" r="7" fill="#E0F4E0" stroke="#888" stroke-width="0.8"/><path d="M10 10 L5 15" stroke="#303030" stroke-width="2"/></svg>
<svg class="a" style="left:160px;top:473px" width="20" height="19" viewBox="0 0 20 19"><circle cx="9.5" cy="9.5" r="8.5" fill="#D8D6D0" stroke="#A8A6A0" stroke-width="1"/><circle cx="10" cy="10" r="7" fill="#E0F4E0" stroke="#888" stroke-width="0.8"/><path d="M10 10 L5 15" stroke="#303030" stroke-width="2"/></svg>
<div class="t lbl" style="left:106px;top:456px">Pan</div>
<div class="t lbl" style="left:106px;top:477px">Volume</div>
<div class="t lbl" style="left:189px;top:456px">Chorus</div>
<div class="t lbl" style="left:189px;top:477px">Reverb</div>
<div class="a" style="left:312px;top:82px;width:229px;height:447px;background:#EDECE6"></div>
<div class="a" style="left:312px;top:125px;width:228px;height:1px;background:#4E4C48"></div>
<div class="a" style="left:312px;top:126px;width:228px;height:1px;background:#FFFFFF"></div>
<div class="a" style="left:312px;top:126px;width:1px;height:23px;background:#FFFFFF"></div>
<div class="t" style="left:313px;width:14px;text-align:right;top:130px;font-size:14px">1</div>
<svg class="a" style="left:335px;top:129px" width="32" height="15" viewBox="0 0 32 15"><defs><linearGradient id="rg0" x1="0.15" y1="0.1" x2="0.85" y2="0.9"><stop offset="0" stop-color="#5A5A5A"/><stop offset="0.5" stop-color="#8A8A8A"/><stop offset="1" stop-color="#E8E8E8"/></linearGradient><radialGradient id="bl0" cx="0.5" cy="0.45" r="0.55"><stop offset="0" stop-color="#FFFFFF"/><stop offset="0.45" stop-color="#A8D4FF"/><stop offset="1" stop-color="#3A8CF0"/></radialGradient><radialGradient id="rd0" cx="0.45" cy="0.4" r="0.6"><stop offset="0" stop-color="#B01010"/><stop offset="1" stop-color="#8A0000"/></radialGradient></defs><circle cx="7.5" cy="7.5" r="7.2" fill="url(#rg0)"/><circle cx="7.5" cy="7.5" r="5.1" fill="url(#bl0)"/><circle cx="23.5" cy="7.5" r="7.2" fill="url(#rg0)"/><circle cx="23.5" cy="7.5" r="5.1" fill="url(#rd0)"/></svg>
<div class="t" style="left:376px;top:130px;font-size:14px;letter-spacing:0.35px">pan flute</div>
<div class="a" style="left:312px;top:149px;width:228px;height:1px;background:#4E4C48"></div>
<div class="a" style="left:312px;top:150px;width:228px;height:1px;background:#FFFFFF"></div>
<div class="a" style="left:312px;top:150px;width:1px;height:23px;background:#FFFFFF"></div>
<div class="t" style="left:313px;width:14px;text-align:right;top:154px;font-size:14px">2</div>
<svg class="a" style="left:335px;top:153px" width="32" height="15" viewBox="0 0 32 15"><defs><linearGradient id="rg1" x1="0.15" y1="0.1" x2="0.85" y2="0.9"><stop offset="0" stop-color="#5A5A5A"/><stop offset="0.5" stop-color="#8A8A8A"/><stop offset="1" stop-color="#E8E8E8"/></linearGradient><radialGradient id="bl1" cx="0.5" cy="0.45" r="0.55"><stop offset="0" stop-color="#FFFFFF"/><stop offset="0.45" stop-color="#A8D4FF"/><stop offset="1" stop-color="#3A8CF0"/></radialGradient><radialGradient id="rd1" cx="0.45" cy="0.4" r="0.6"><stop offset="0" stop-color="#B01010"/><stop offset="1" stop-color="#8A0000"/></radialGradient></defs><circle cx="7.5" cy="7.5" r="7.2" fill="url(#rg1)"/><circle cx="7.5" cy="7.5" r="5.1" fill="url(#bl1)"/><circle cx="23.5" cy="7.5" r="7.2" fill="url(#rg1)"/><circle cx="23.5" cy="7.5" r="5.1" fill="url(#rd1)"/></svg>
<div class="t" style="left:376px;top:154px;font-size:14px;letter-spacing:0.35px">nylon guitar</div>
<div class="a" style="left:312px;top:173px;width:228px;height:1px;background:#4E4C48"></div>
<div class="a" style="left:312px;top:174px;width:228px;height:1px;background:#FFFFFF"></div>
<div class="a" style="left:312px;top:174px;width:1px;height:23px;background:#FFFFFF"></div>
<div class="t" style="left:313px;width:14px;text-align:right;top:178px;font-size:14px">3</div>
<svg class="a" style="left:335px;top:177px" width="32" height="15" viewBox="0 0 32 15"><defs><linearGradient id="rg2" x1="0.15" y1="0.1" x2="0.85" y2="0.9"><stop offset="0" stop-color="#5A5A5A"/><stop offset="0.5" stop-color="#8A8A8A"/><stop offset="1" stop-color="#E8E8E8"/></linearGradient><radialGradient id="bl2" cx="0.5" cy="0.45" r="0.55"><stop offset="0" stop-color="#FFFFFF"/><stop offset="0.45" stop-color="#A8D4FF"/><stop offset="1" stop-color="#3A8CF0"/></radialGradient><radialGradient id="rd2" cx="0.45" cy="0.4" r="0.6"><stop offset="0" stop-color="#B01010"/><stop offset="1" stop-color="#8A0000"/></radialGradient></defs><circle cx="7.5" cy="7.5" r="7.2" fill="url(#rg2)"/><circle cx="7.5" cy="7.5" r="5.1" fill="url(#bl2)"/><circle cx="23.5" cy="7.5" r="7.2" fill="url(#rg2)"/><circle cx="23.5" cy="7.5" r="5.1" fill="url(#rd2)"/></svg>
<div class="t" style="left:376px;top:178px;font-size:14px;letter-spacing:0.35px">church organ</div>
<div class="a" style="left:312px;top:197px;width:228px;height:1px;background:#4E4C48"></div>
<div class="a" style="left:312px;top:198px;width:228px;height:1px;background:#FFFFFF"></div>
<div class="a" style="left:312px;top:198px;width:1px;height:23px;background:#FFFFFF"></div>
<div class="t" style="left:313px;width:14px;text-align:right;top:202px;font-size:14px">4</div>
<svg class="a" style="left:335px;top:201px" width="32" height="15" viewBox="0 0 32 15"><defs><linearGradient id="rg3" x1="0.15" y1="0.1" x2="0.85" y2="0.9"><stop offset="0" stop-color="#5A5A5A"/><stop offset="0.5" stop-color="#8A8A8A"/><stop offset="1" stop-color="#E8E8E8"/></linearGradient><radialGradient id="bl3" cx="0.5" cy="0.45" r="0.55"><stop offset="0" stop-color="#FFFFFF"/><stop offset="0.45" stop-color="#A8D4FF"/><stop offset="1" stop-color="#3A8CF0"/></radialGradient><radialGradient id="rd3" cx="0.45" cy="0.4" r="0.6"><stop offset="0" stop-color="#B01010"/><stop offset="1" stop-color="#8A0000"/></radialGradient></defs><circle cx="7.5" cy="7.5" r="7.2" fill="url(#rg3)"/><circle cx="7.5" cy="7.5" r="5.1" fill="url(#bl3)"/><circle cx="23.5" cy="7.5" r="7.2" fill="url(#rg3)"/><circle cx="23.5" cy="7.5" r="5.1" fill="url(#rd3)"/></svg>
<div class="t" style="left:376px;top:202px;font-size:14px;letter-spacing:0.35px">pizzicato strings</div>
<div class="a" style="left:312px;top:221px;width:228px;height:1px;background:#4E4C48"></div>
<div class="a" style="left:312px;top:222px;width:228px;height:1px;background:#FFFFFF"></div>
<div class="a" style="left:312px;top:222px;width:1px;height:23px;background:#FFFFFF"></div>
<div class="t" style="left:313px;width:14px;text-align:right;top:226px;font-size:14px">5</div>
<svg class="a" style="left:335px;top:225px" width="32" height="15" viewBox="0 0 32 15"><defs><linearGradient id="rg4" x1="0.15" y1="0.1" x2="0.85" y2="0.9"><stop offset="0" stop-color="#5A5A5A"/><stop offset="0.5" stop-color="#8A8A8A"/><stop offset="1" stop-color="#E8E8E8"/></linearGradient><radialGradient id="bl4" cx="0.5" cy="0.45" r="0.55"><stop offset="0" stop-color="#FFFFFF"/><stop offset="0.45" stop-color="#A8D4FF"/><stop offset="1" stop-color="#3A8CF0"/></radialGradient><radialGradient id="rd4" cx="0.45" cy="0.4" r="0.6"><stop offset="0" stop-color="#B01010"/><stop offset="1" stop-color="#8A0000"/></radialGradient></defs><circle cx="7.5" cy="7.5" r="7.2" fill="url(#rg4)"/><circle cx="7.5" cy="7.5" r="5.1" fill="url(#bl4)"/><circle cx="23.5" cy="7.5" r="7.2" fill="url(#rg4)"/><circle cx="23.5" cy="7.5" r="5.1" fill="url(#rd4)"/></svg>
<div class="t" style="left:376px;top:226px;font-size:14px;letter-spacing:0.35px">picked bass</div>
<div class="a" style="left:312px;top:244px;width:228px;height:1px;background:#4E4C48"></div>
<div class="a" style="left:312px;top:245px;width:228px;height:1px;background:#FFFFFF"></div>
<div class="a" style="left:312px;top:245px;width:1px;height:23px;background:#FFFFFF"></div>
<div class="t" style="left:313px;width:14px;text-align:right;top:249px;font-size:14px">6</div>
<svg class="a" style="left:335px;top:248px" width="32" height="15" viewBox="0 0 32 15"><defs><linearGradient id="rg5" x1="0.15" y1="0.1" x2="0.85" y2="0.9"><stop offset="0" stop-color="#5A5A5A"/><stop offset="0.5" stop-color="#8A8A8A"/><stop offset="1" stop-color="#E8E8E8"/></linearGradient><radialGradient id="bl5" cx="0.5" cy="0.45" r="0.55"><stop offset="0" stop-color="#FFFFFF"/><stop offset="0.45" stop-color="#A8D4FF"/><stop offset="1" stop-color="#3A8CF0"/></radialGradient><radialGradient id="rd5" cx="0.45" cy="0.4" r="0.6"><stop offset="0" stop-color="#B01010"/><stop offset="1" stop-color="#8A0000"/></radialGradient></defs><circle cx="7.5" cy="7.5" r="7.2" fill="url(#rg5)"/><circle cx="7.5" cy="7.5" r="5.1" fill="url(#bl5)"/><circle cx="23.5" cy="7.5" r="7.2" fill="url(#rg5)"/><circle cx="23.5" cy="7.5" r="5.1" fill="url(#rd5)"/></svg>
<div class="t" style="left:376px;top:249px;font-size:14px;letter-spacing:0.35px">choir ahhs</div>
<div class="a" style="left:312px;top:268px;width:228px;height:1px;background:#4E4C48"></div>
<div class="a" style="left:312px;top:269px;width:228px;height:1px;background:#FFFFFF"></div>
<div class="a" style="left:312px;top:269px;width:1px;height:23px;background:#FFFFFF"></div>
<div class="t" style="left:313px;width:14px;text-align:right;top:273px;font-size:14px">7</div>
<svg class="a" style="left:335px;top:272px" width="32" height="15" viewBox="0 0 32 15"><defs><linearGradient id="rg6" x1="0.15" y1="0.1" x2="0.85" y2="0.9"><stop offset="0" stop-color="#5A5A5A"/><stop offset="0.5" stop-color="#8A8A8A"/><stop offset="1" stop-color="#E8E8E8"/></linearGradient><radialGradient id="bl6" cx="0.5" cy="0.45" r="0.55"><stop offset="0" stop-color="#FFFFFF"/><stop offset="0.45" stop-color="#A8D4FF"/><stop offset="1" stop-color="#3A8CF0"/></radialGradient><radialGradient id="rd6" cx="0.45" cy="0.4" r="0.6"><stop offset="0" stop-color="#FF9090"/><stop offset="1" stop-color="#F03030"/></radialGradient></defs><circle cx="7.5" cy="7.5" r="7.2" fill="url(#rg6)"/><circle cx="7.5" cy="7.5" r="5.1" fill="url(#bl6)"/><circle cx="23.5" cy="7.5" r="7.2" fill="url(#rg6)"/><circle cx="23.5" cy="7.5" r="5.1" fill="url(#rd6)"/></svg>
<div class="t" style="left:376px;top:273px;font-size:14px;letter-spacing:0.35px">cymbal</div>
<div class="a" style="left:312px;top:292px;width:228px;height:1px;background:#4E4C48"></div>
<div class="a" style="left:312px;top:293px;width:228px;height:1px;background:#FFFFFF"></div>
<div class="a" style="left:312px;top:293px;width:1px;height:23px;background:#FFFFFF"></div>
<div class="t" style="left:313px;width:14px;text-align:right;top:297px;font-size:14px">8</div>
<svg class="a" style="left:335px;top:296px" width="32" height="15" viewBox="0 0 32 15"><defs><linearGradient id="rg7" x1="0.15" y1="0.1" x2="0.85" y2="0.9"><stop offset="0" stop-color="#5A5A5A"/><stop offset="0.5" stop-color="#8A8A8A"/><stop offset="1" stop-color="#E8E8E8"/></linearGradient><radialGradient id="bl7" cx="0.5" cy="0.45" r="0.55"><stop offset="0" stop-color="#FFFFFF"/><stop offset="0.45" stop-color="#A8D4FF"/><stop offset="1" stop-color="#3A8CF0"/></radialGradient><radialGradient id="rd7" cx="0.45" cy="0.4" r="0.6"><stop offset="0" stop-color="#B01010"/><stop offset="1" stop-color="#8A0000"/></radialGradient></defs><circle cx="7.5" cy="7.5" r="7.2" fill="url(#rg7)"/><circle cx="7.5" cy="7.5" r="5.1" fill="url(#bl7)"/><circle cx="23.5" cy="7.5" r="7.2" fill="url(#rg7)"/><circle cx="23.5" cy="7.5" r="5.1" fill="url(#rd7)"/></svg>
<div class="t" style="left:376px;top:297px;font-size:14px;letter-spacing:0.35px">drums</div>
<div class="a" style="left:312px;top:316px;width:228px;height:1px;background:#4E4C48"></div>
<div class="a" style="left:312px;top:317px;width:228px;height:1px;background:#FFFFFF"></div>
<div class="a" style="left:312px;top:317px;width:1px;height:23px;background:#FFFFFF"></div>
<div class="t" style="left:313px;width:14px;text-align:right;top:321px;font-size:14px">9</div>
<svg class="a" style="left:335px;top:320px" width="32" height="15" viewBox="0 0 32 15"><defs><linearGradient id="rg8" x1="0.15" y1="0.1" x2="0.85" y2="0.9"><stop offset="0" stop-color="#5A5A5A"/><stop offset="0.5" stop-color="#8A8A8A"/><stop offset="1" stop-color="#E8E8E8"/></linearGradient><radialGradient id="bl8" cx="0.5" cy="0.45" r="0.55"><stop offset="0" stop-color="#FFFFFF"/><stop offset="0.45" stop-color="#A8D4FF"/><stop offset="1" stop-color="#3A8CF0"/></radialGradient><radialGradient id="rd8" cx="0.45" cy="0.4" r="0.6"><stop offset="0" stop-color="#B01010"/><stop offset="1" stop-color="#8A0000"/></radialGradient></defs><circle cx="7.5" cy="7.5" r="7.2" fill="url(#rg8)"/><circle cx="7.5" cy="7.5" r="5.1" fill="url(#bl8)"/><circle cx="23.5" cy="7.5" r="7.2" fill="url(#rg8)"/><circle cx="23.5" cy="7.5" r="5.1" fill="url(#rd8)"/></svg>
<div class="a" style="left:368px;top:321px;width:172px;height:16px;background:#FEDA72"></div>
<div class="t" style="left:376px;top:321px;font-size:14px;letter-spacing:0.35px">claps</div>
<div class="a" style="left:312px;top:340px;width:228px;height:1px;background:#4E4C48"></div>
<div class="a" style="left:312px;top:341px;width:228px;height:1px;background:#FFFFFF"></div>
<div class="a" style="left:312px;top:341px;width:1px;height:23px;background:#FFFFFF"></div>
<div class="t" style="left:313px;width:16px;text-align:right;top:345px;font-size:14px">10</div>
<svg class="a" style="left:335px;top:344px" width="32" height="15" viewBox="0 0 32 15"><defs><linearGradient id="rg9" x1="0.15" y1="0.1" x2="0.85" y2="0.9"><stop offset="0" stop-color="#5A5A5A"/><stop offset="0.5" stop-color="#8A8A8A"/><stop offset="1" stop-color="#E8E8E8"/></linearGradient><radialGradient id="bl9" cx="0.5" cy="0.45" r="0.55"><stop offset="0" stop-color="#FFFFFF"/><stop offset="0.45" stop-color="#A8D4FF"/><stop offset="1" stop-color="#3A8CF0"/></radialGradient><radialGradient id="rd9" cx="0.45" cy="0.4" r="0.6"><stop offset="0" stop-color="#B01010"/><stop offset="1" stop-color="#8A0000"/></radialGradient></defs><circle cx="7.5" cy="7.5" r="7.2" fill="url(#rg9)"/><circle cx="7.5" cy="7.5" r="5.1" fill="url(#bl9)"/><circle cx="23.5" cy="7.5" r="7.2" fill="url(#rg9)"/><circle cx="23.5" cy="7.5" r="5.1" fill="url(#rd9)"/></svg>
<div class="t" style="left:376px;top:345px;font-size:14px;letter-spacing:0.35px">&lt;untitled&gt;</div>
<div class="a" style="left:312px;top:364px;width:228px;height:1px;background:#4E4C48"></div>
<div class="a" style="left:312px;top:365px;width:228px;height:1px;background:#FFFFFF"></div>
<div class="a" style="left:541px;top:125px;width:1px;height:405px;background:#55534F"></div>
<div class="a" style="left:542px;top:126px;width:706px;height:362px;background:#E4E4E4"></div>
<div class="a" style="left:541px;top:82px;width:724px;height:18px;background:#88E6B4"></div>
<div class="t" style="left:541px;top:82px;font-size:11px">60</div>
<div class="a" style="left:541px;top:94px;width:1px;height:21px;background:#000"></div>
<div class="a" style="left:541px;top:100px;width:724px;height:1px;background:#000"></div>
<div class="a" style="left:542px;top:101px;width:723px;height:14px;background:#EEEDE7"></div>
<div class="a" style="left:541px;top:115px;width:724px;height:11px;background:#646464"></div>
<svg class="a" style="left:541px;top:115px" width="680" height="10" shape-rendering="crispEdges"><rect x="0" y="2" width="1" height="8" fill="#FFF"/><rect x="2" y="7" width="1" height="3" fill="#FFF"/><rect x="5" y="7" width="1" height="3" fill="#FFF"/><rect x="7" y="7" width="1" height="3" fill="#FFF"/><rect x="10" y="2" width="1" height="8" fill="#FFF"/><rect x="12" y="7" width="1" height="3" fill="#FFF"/><rect x="15" y="7" width="1" height="3" fill="#FFF"/><rect x="17" y="7" width="1" height="3" fill="#FFF"/><rect x="20" y="2" width="1" height="8" fill="#FFF"/><rect x="22" y="7" width="1" height="3" fill="#FFF"/><rect x="25" y="7" width="1" height="3" fill="#FFF"/><rect x="27" y="7" width="1" height="3" fill="#FFF"/><rect x="30" y="2" width="1" height="8" fill="#FFF"/><rect x="32" y="7" width="1" height="3" fill="#FFF"/><rect x="35" y="7" width="1" height="3" fill="#FFF"/><rect x="37" y="7" width="1" height="3" fill="#FFF"/><rect x="40" y="2" width="1" height="8" fill="#FFF"/><rect x="42" y="7" width="1" height="3" fill="#FFF"/><rect x="45" y="7" width="1" height="3" fill="#FFF"/><rect x="47" y="7" width="1" height="3" fill="#FFF"/><rect x="50" y="2" width="1" height="8" fill="#FFF"/><rect x="52" y="7" width="1" height="3" fill="#FFF"/><rect x="55" y="7" width="1" height="3" fill="#FFF"/><rect x="57" y="7" width="1" height="3" fill="#FFF"/><rect x="60" y="2" width="1" height="8" fill="#FFF"/><rect x="62" y="7" width="1" height="3" fill="#FFF"/><rect x="65" y="7" width="1" height="3" fill="#FFF"/><rect x="67" y="7" width="1" height="3" fill="#FFF"/><rect x="70" y="2" width="1" height="8" fill="#FFF"/><rect x="72" y="7" width="1" height="3" fill="#FFF"/><rect x="75" y="7" width="1" height="3" fill="#FFF"/><rect x="77" y="7" width="1" height="3" fill="#FFF"/><rect x="80" y="2" width="1" height="8" fill="#FFF"/><rect x="82" y="7" width="1" height="3" fill="#FFF"/><rect x="85" y="7" width="1" height="3" fill="#FFF"/><rect x="87" y="7" width="1" height="3" fill="#FFF"/><rect x="90" y="2" width="1" height="8" fill="#FFF"/><rect x="92" y="7" width="1" height="3" fill="#FFF"/><rect x="95" y="7" width="1" height="3" fill="#FFF"/><rect x="97" y="7" width="1" height="3" fill="#FFF"/><rect x="100" y="2" width="1" height="8" fill="#FFF"/><rect x="102" y="7" width="1" height="3" fill="#FFF"/><rect x="105" y="7" width="1" height="3" fill="#FFF"/><rect x="107" y="7" width="1" height="3" fill="#FFF"/><rect x="110" y="2" width="1" height="8" fill="#FFF"/><rect x="112" y="7" width="1" height="3" fill="#FFF"/><rect x="115" y="7" width="1" height="3" fill="#FFF"/><rect x="117" y="7" width="1" height="3" fill="#FFF"/><rect x="120" y="2" width="1" height="8" fill="#FFF"/><rect x="122" y="7" width="1" height="3" fill="#FFF"/><rect x="125" y="7" width="1" height="3" fill="#FFF"/><rect x="127" y="7" width="1" height="3" fill="#FFF"/><rect x="130" y="2" width="1" height="8" fill="#FFF"/><rect x="132" y="7" width="1" height="3" fill="#FFF"/><rect x="135" y="7" width="1" height="3" fill="#FFF"/><rect x="137" y="7" width="1" height="3" fill="#FFF"/><rect x="140" y="2" width="1" height="8" fill="#FFF"/><rect x="142" y="7" width="1" height="3" fill="#FFF"/><rect x="145" y="7" width="1" height="3" fill="#FFF"/><rect x="147" y="7" width="1" height="3" fill="#FFF"/><rect x="150" y="2" width="1" height="8" fill="#FFF"/><rect x="152" y="7" width="1" height="3" fill="#FFF"/><rect x="155" y="7" width="1" height="3" fill="#FFF"/><rect x="157" y="7" width="1" height="3" fill="#FFF"/><rect x="160" y="2" width="1" height="8" fill="#FFF"/><rect x="162" y="7" width="1" height="3" fill="#FFF"/><rect x="165" y="7" width="1" height="3" fill="#FFF"/><rect x="167" y="7" width="1" height="3" fill="#FFF"/><rect x="170" y="2" width="1" height="8" fill="#FFF"/><rect x="172" y="7" width="1" height="3" fill="#FFF"/><rect x="175" y="7" width="1" height="3" fill="#FFF"/><rect x="177" y="7" width="1" height="3" fill="#FFF"/><rect x="180" y="2" width="1" height="8" fill="#FFF"/><rect x="182" y="7" width="1" height="3" fill="#FFF"/><rect x="185" y="7" width="1" height="3" fill="#FFF"/><rect x="187" y="7" width="1" height="3" fill="#FFF"/><rect x="190" y="2" width="1" height="8" fill="#FFF"/><rect x="192" y="7" width="1" height="3" fill="#FFF"/><rect x="195" y="7" width="1" height="3" fill="#FFF"/><rect x="197" y="7" width="1" height="3" fill="#FFF"/><rect x="200" y="2" width="1" height="8" fill="#FFF"/><rect x="202" y="7" width="1" height="3" fill="#FFF"/><rect x="205" y="7" width="1" height="3" fill="#FFF"/><rect x="207" y="7" width="1" height="3" fill="#FFF"/><rect x="210" y="2" width="1" height="8" fill="#FFF"/><rect x="212" y="7" width="1" height="3" fill="#FFF"/><rect x="215" y="7" width="1" height="3" fill="#FFF"/><rect x="217" y="7" width="1" height="3" fill="#FFF"/><rect x="220" y="2" width="1" height="8" fill="#FFF"/><rect x="222" y="7" width="1" height="3" fill="#FFF"/><rect x="225" y="7" width="1" height="3" fill="#FFF"/><rect x="227" y="7" width="1" height="3" fill="#FFF"/><rect x="230" y="2" width="1" height="8" fill="#FFF"/><rect x="232" y="7" width="1" height="3" fill="#FFF"/><rect x="235" y="7" width="1" height="3" fill="#FFF"/><rect x="237" y="7" width="1" height="3" fill="#FFF"/><rect x="240" y="2" width="1" height="8" fill="#FFF"/><rect x="242" y="7" width="1" height="3" fill="#FFF"/><rect x="245" y="7" width="1" height="3" fill="#FFF"/><rect x="247" y="7" width="1" height="3" fill="#FFF"/><rect x="250" y="2" width="1" height="8" fill="#FFF"/><rect x="252" y="7" width="1" height="3" fill="#FFF"/><rect x="255" y="7" width="1" height="3" fill="#FFF"/><rect x="257" y="7" width="1" height="3" fill="#FFF"/><rect x="260" y="2" width="1" height="8" fill="#FFF"/><rect x="262" y="7" width="1" height="3" fill="#FFF"/><rect x="265" y="7" width="1" height="3" fill="#FFF"/><rect x="267" y="7" width="1" height="3" fill="#FFF"/><rect x="270" y="2" width="1" height="8" fill="#FFF"/><rect x="272" y="7" width="1" height="3" fill="#FFF"/><rect x="275" y="7" width="1" height="3" fill="#FFF"/><rect x="277" y="7" width="1" height="3" fill="#FFF"/><rect x="280" y="2" width="1" height="8" fill="#FFF"/><rect x="282" y="7" width="1" height="3" fill="#FFF"/><rect x="285" y="7" width="1" height="3" fill="#FFF"/><rect x="287" y="7" width="1" height="3" fill="#FFF"/><rect x="290" y="2" width="1" height="8" fill="#FFF"/><rect x="292" y="7" width="1" height="3" fill="#FFF"/><rect x="295" y="7" width="1" height="3" fill="#FFF"/><rect x="297" y="7" width="1" height="3" fill="#FFF"/><rect x="300" y="2" width="1" height="8" fill="#FFF"/><rect x="302" y="7" width="1" height="3" fill="#FFF"/><rect x="305" y="7" width="1" height="3" fill="#FFF"/><rect x="307" y="7" width="1" height="3" fill="#FFF"/><rect x="310" y="2" width="1" height="8" fill="#FFF"/><rect x="312" y="7" width="1" height="3" fill="#FFF"/><rect x="315" y="7" width="1" height="3" fill="#FFF"/><rect x="317" y="7" width="1" height="3" fill="#FFF"/><rect x="320" y="2" width="1" height="8" fill="#FFF"/><rect x="322" y="7" width="1" height="3" fill="#FFF"/><rect x="325" y="7" width="1" height="3" fill="#FFF"/><rect x="327" y="7" width="1" height="3" fill="#FFF"/><rect x="330" y="2" width="1" height="8" fill="#FFF"/><rect x="332" y="7" width="1" height="3" fill="#FFF"/><rect x="335" y="7" width="1" height="3" fill="#FFF"/><rect x="337" y="7" width="1" height="3" fill="#FFF"/><rect x="340" y="2" width="1" height="8" fill="#FFF"/><rect x="342" y="7" width="1" height="3" fill="#FFF"/><rect x="345" y="7" width="1" height="3" fill="#FFF"/><rect x="347" y="7" width="1" height="3" fill="#FFF"/><rect x="350" y="2" width="1" height="8" fill="#FFF"/><rect x="352" y="7" width="1" height="3" fill="#FFF"/><rect x="355" y="7" width="1" height="3" fill="#FFF"/><rect x="357" y="7" width="1" height="3" fill="#FFF"/><rect x="360" y="2" width="1" height="8" fill="#FFF"/><rect x="362" y="7" width="1" height="3" fill="#FFF"/><rect x="365" y="7" width="1" height="3" fill="#FFF"/><rect x="367" y="7" width="1" height="3" fill="#FFF"/><rect x="370" y="2" width="1" height="8" fill="#FFF"/><rect x="372" y="7" width="1" height="3" fill="#FFF"/><rect x="375" y="7" width="1" height="3" fill="#FFF"/><rect x="377" y="7" width="1" height="3" fill="#FFF"/><rect x="380" y="2" width="1" height="8" fill="#FFF"/><rect x="382" y="7" width="1" height="3" fill="#FFF"/><rect x="385" y="7" width="1" height="3" fill="#FFF"/><rect x="387" y="7" width="1" height="3" fill="#FFF"/><rect x="390" y="2" width="1" height="8" fill="#FFF"/><rect x="392" y="7" width="1" height="3" fill="#FFF"/><rect x="395" y="7" width="1" height="3" fill="#FFF"/><rect x="397" y="7" width="1" height="3" fill="#FFF"/><rect x="400" y="2" width="1" height="8" fill="#FFF"/><rect x="402" y="7" width="1" height="3" fill="#FFF"/><rect x="405" y="7" width="1" height="3" fill="#FFF"/><rect x="407" y="7" width="1" height="3" fill="#FFF"/><rect x="410" y="2" width="1" height="8" fill="#FFF"/><rect x="412" y="7" width="1" height="3" fill="#FFF"/><rect x="415" y="7" width="1" height="3" fill="#FFF"/><rect x="417" y="7" width="1" height="3" fill="#FFF"/><rect x="420" y="2" width="1" height="8" fill="#FFF"/><rect x="422" y="7" width="1" height="3" fill="#FFF"/><rect x="425" y="7" width="1" height="3" fill="#FFF"/><rect x="427" y="7" width="1" height="3" fill="#FFF"/><rect x="430" y="2" width="1" height="8" fill="#FFF"/><rect x="432" y="7" width="1" height="3" fill="#FFF"/><rect x="435" y="7" width="1" height="3" fill="#FFF"/><rect x="437" y="7" width="1" height="3" fill="#FFF"/><rect x="440" y="2" width="1" height="8" fill="#FFF"/><rect x="442" y="7" width="1" height="3" fill="#FFF"/><rect x="445" y="7" width="1" height="3" fill="#FFF"/><rect x="447" y="7" width="1" height="3" fill="#FFF"/><rect x="450" y="2" width="1" height="8" fill="#FFF"/><rect x="452" y="7" width="1" height="3" fill="#FFF"/><rect x="455" y="7" width="1" height="3" fill="#FFF"/><rect x="457" y="7" width="1" height="3" fill="#FFF"/><rect x="460" y="2" width="1" height="8" fill="#FFF"/><rect x="462" y="7" width="1" height="3" fill="#FFF"/><rect x="465" y="7" width="1" height="3" fill="#FFF"/><rect x="467" y="7" width="1" height="3" fill="#FFF"/><rect x="470" y="2" width="1" height="8" fill="#FFF"/><rect x="472" y="7" width="1" height="3" fill="#FFF"/><rect x="475" y="7" width="1" height="3" fill="#FFF"/><rect x="477" y="7" width="1" height="3" fill="#FFF"/><rect x="480" y="2" width="1" height="8" fill="#FFF"/><rect x="482" y="7" width="1" height="3" fill="#FFF"/><rect x="485" y="7" width="1" height="3" fill="#FFF"/><rect x="487" y="7" width="1" height="3" fill="#FFF"/><rect x="490" y="2" width="1" height="8" fill="#FFF"/><rect x="492" y="7" width="1" height="3" fill="#FFF"/><rect x="495" y="7" width="1" height="3" fill="#FFF"/><rect x="497" y="7" width="1" height="3" fill="#FFF"/><rect x="500" y="2" width="1" height="8" fill="#FFF"/><rect x="502" y="7" width="1" height="3" fill="#FFF"/><rect x="505" y="7" width="1" height="3" fill="#FFF"/><rect x="507" y="7" width="1" height="3" fill="#FFF"/><rect x="510" y="2" width="1" height="8" fill="#FFF"/><rect x="512" y="7" width="1" height="3" fill="#FFF"/><rect x="515" y="7" width="1" height="3" fill="#FFF"/><rect x="517" y="7" width="1" height="3" fill="#FFF"/><rect x="520" y="2" width="1" height="8" fill="#FFF"/><rect x="522" y="7" width="1" height="3" fill="#FFF"/><rect x="525" y="7" width="1" height="3" fill="#FFF"/><rect x="527" y="7" width="1" height="3" fill="#FFF"/><rect x="530" y="2" width="1" height="8" fill="#FFF"/><rect x="532" y="7" width="1" height="3" fill="#FFF"/><rect x="535" y="7" width="1" height="3" fill="#FFF"/><rect x="537" y="7" width="1" height="3" fill="#FFF"/><rect x="540" y="2" width="1" height="8" fill="#FFF"/><rect x="542" y="7" width="1" height="3" fill="#FFF"/><rect x="545" y="7" width="1" height="3" fill="#FFF"/><rect x="547" y="7" width="1" height="3" fill="#FFF"/><rect x="550" y="2" width="1" height="8" fill="#FFF"/><rect x="552" y="7" width="1" height="3" fill="#FFF"/><rect x="555" y="7" width="1" height="3" fill="#FFF"/><rect x="557" y="7" width="1" height="3" fill="#FFF"/><rect x="560" y="2" width="1" height="8" fill="#FFF"/><rect x="562" y="7" width="1" height="3" fill="#FFF"/><rect x="565" y="7" width="1" height="3" fill="#FFF"/><rect x="567" y="7" width="1" height="3" fill="#FFF"/><rect x="570" y="2" width="1" height="8" fill="#FFF"/><rect x="572" y="7" width="1" height="3" fill="#FFF"/><rect x="575" y="7" width="1" height="3" fill="#FFF"/><rect x="577" y="7" width="1" height="3" fill="#FFF"/><rect x="580" y="2" width="1" height="8" fill="#FFF"/><rect x="582" y="7" width="1" height="3" fill="#FFF"/><rect x="585" y="7" width="1" height="3" fill="#FFF"/><rect x="587" y="7" width="1" height="3" fill="#FFF"/><rect x="590" y="2" width="1" height="8" fill="#FFF"/><rect x="592" y="7" width="1" height="3" fill="#FFF"/><rect x="595" y="7" width="1" height="3" fill="#FFF"/><rect x="597" y="7" width="1" height="3" fill="#FFF"/><rect x="600" y="2" width="1" height="8" fill="#FFF"/><rect x="602" y="7" width="1" height="3" fill="#FFF"/><rect x="605" y="7" width="1" height="3" fill="#FFF"/><rect x="607" y="7" width="1" height="3" fill="#FFF"/><rect x="610" y="2" width="1" height="8" fill="#FFF"/><rect x="612" y="7" width="1" height="3" fill="#FFF"/><rect x="615" y="7" width="1" height="3" fill="#FFF"/><rect x="617" y="7" width="1" height="3" fill="#FFF"/><rect x="620" y="2" width="1" height="8" fill="#FFF"/><rect x="622" y="7" width="1" height="3" fill="#FFF"/><rect x="625" y="7" width="1" height="3" fill="#FFF"/><rect x="627" y="7" width="1" height="3" fill="#FFF"/><rect x="630" y="2" width="1" height="8" fill="#FFF"/><rect x="632" y="7" width="1" height="3" fill="#FFF"/><rect x="635" y="7" width="1" height="3" fill="#FFF"/><rect x="637" y="7" width="1" height="3" fill="#FFF"/><rect x="640" y="2" width="1" height="8" fill="#FFF"/><rect x="642" y="7" width="1" height="3" fill="#FFF"/><rect x="645" y="7" width="1" height="3" fill="#FFF"/><rect x="647" y="7" width="1" height="3" fill="#FFF"/><rect x="650" y="2" width="1" height="8" fill="#FFF"/><rect x="652" y="7" width="1" height="3" fill="#FFF"/><rect x="655" y="7" width="1" height="3" fill="#FFF"/><rect x="657" y="7" width="1" height="3" fill="#FFF"/><rect x="660" y="2" width="1" height="8" fill="#FFF"/><rect x="662" y="7" width="1" height="3" fill="#FFF"/><rect x="665" y="7" width="1" height="3" fill="#FFF"/><rect x="667" y="7" width="1" height="3" fill="#FFF"/></svg>
<div class="a" style="left:541px;top:101px;width:1px;height:14px;background:#000"></div>
<div class="t" style="left:546px;top:103px;font-size:11px">1</div>
<div class="a" style="left:581px;top:101px;width:1px;height:14px;background:#000"></div>
<div class="t" style="left:586px;top:103px;font-size:11px">5</div>
<div class="a" style="left:621px;top:101px;width:1px;height:14px;background:#000"></div>
<div class="t" style="left:626px;top:103px;font-size:11px">9</div>
<div class="a" style="left:661px;top:101px;width:1px;height:14px;background:#000"></div>
<div class="t" style="left:666px;top:103px;font-size:11px">13</div>
<div class="a" style="left:701px;top:101px;width:1px;height:14px;background:#000"></div>
<div class="t" style="left:706px;top:103px;font-size:11px">17</div>
<div class="a" style="left:741px;top:101px;width:1px;height:14px;background:#000"></div>
<div class="t" style="left:746px;top:103px;font-size:11px">21</div>
<div class="a" style="left:781px;top:101px;width:1px;height:14px;background:#000"></div>
<div class="t" style="left:786px;top:103px;font-size:11px">25</div>
<div class="a" style="left:821px;top:101px;width:1px;height:14px;background:#000"></div>
<div class="t" style="left:826px;top:103px;font-size:11px">29</div>
<div class="a" style="left:861px;top:101px;width:1px;height:14px;background:#000"></div>
<div class="t" style="left:866px;top:103px;font-size:11px">33</div>
<div class="a" style="left:901px;top:101px;width:1px;height:14px;background:#000"></div>
<div class="t" style="left:906px;top:103px;font-size:11px">37</div>
<div class="a" style="left:941px;top:101px;width:1px;height:14px;background:#000"></div>
<div class="t" style="left:946px;top:103px;font-size:11px">41</div>
<div class="a" style="left:981px;top:101px;width:1px;height:14px;background:#000"></div>
<div class="t" style="left:986px;top:103px;font-size:11px">45</div>
<div class="a" style="left:1021px;top:101px;width:1px;height:14px;background:#000"></div>
<div class="t" style="left:1026px;top:103px;font-size:11px">49</div>
<div class="a" style="left:1061px;top:101px;width:1px;height:14px;background:#000"></div>
<div class="t" style="left:1066px;top:103px;font-size:11px">53</div>
<div class="a" style="left:1101px;top:101px;width:1px;height:14px;background:#000"></div>
<div class="t" style="left:1106px;top:103px;font-size:11px">57</div>
<div class="a" style="left:1141px;top:101px;width:1px;height:14px;background:#000"></div>
<div class="t" style="left:1146px;top:103px;font-size:11px">61</div>
<div class="a" style="left:1181px;top:101px;width:1px;height:14px;background:#000"></div>
<div class="t" style="left:1186px;top:103px;font-size:11px">65</div>
<div class="a" style="left:541px;top:488px;width:707px;height:10px;background:#646464"></div>
<svg class="a" style="left:541px;top:488px" width="680" height="10" shape-rendering="crispEdges"><rect x="0" y="0" width="1" height="8" fill="#FFF"/><rect x="4" y="0" width="1" height="3" fill="#FFF"/><rect x="6" y="0" width="1" height="3" fill="#FFF"/><rect x="8" y="0" width="1" height="3" fill="#FFF"/><rect x="10" y="0" width="1" height="8" fill="#FFF"/><rect x="14" y="0" width="1" height="3" fill="#FFF"/><rect x="16" y="0" width="1" height="3" fill="#FFF"/><rect x="18" y="0" width="1" height="3" fill="#FFF"/><rect x="20" y="0" width="1" height="8" fill="#FFF"/><rect x="24" y="0" width="1" height="3" fill="#FFF"/><rect x="26" y="0" width="1" height="3" fill="#FFF"/><rect x="28" y="0" width="1" height="3" fill="#FFF"/><rect x="30" y="0" width="1" height="8" fill="#FFF"/><rect x="34" y="0" width="1" height="3" fill="#FFF"/><rect x="36" y="0" width="1" height="3" fill="#FFF"/><rect x="38" y="0" width="1" height="3" fill="#FFF"/><rect x="40" y="0" width="1" height="8" fill="#FFF"/><rect x="44" y="0" width="1" height="3" fill="#FFF"/><rect x="46" y="0" width="1" height="3" fill="#FFF"/><rect x="48" y="0" width="1" height="3" fill="#FFF"/><rect x="50" y="0" width="1" height="8" fill="#FFF"/><rect x="54" y="0" width="1" height="3" fill="#FFF"/><rect x="56" y="0" width="1" height="3" fill="#FFF"/><rect x="58" y="0" width="1" height="3" fill="#FFF"/><rect x="60" y="0" width="1" height="8" fill="#FFF"/><rect x="64" y="0" width="1" height="3" fill="#FFF"/><rect x="66" y="0" width="1" height="3" fill="#FFF"/><rect x="68" y="0" width="1" height="3" fill="#FFF"/><rect x="70" y="0" width="1" height="8" fill="#FFF"/><rect x="74" y="0" width="1" height="3" fill="#FFF"/><rect x="76" y="0" width="1" height="3" fill="#FFF"/><rect x="78" y="0" width="1" height="3" fill="#FFF"/><rect x="80" y="0" width="1" height="8" fill="#FFF"/><rect x="84" y="0" width="1" height="3" fill="#FFF"/><rect x="86" y="0" width="1" height="3" fill="#FFF"/><rect x="88" y="0" width="1" height="3" fill="#FFF"/><rect x="90" y="0" width="1" height="8" fill="#FFF"/><rect x="94" y="0" width="1" height="3" fill="#FFF"/><rect x="96" y="0" width="1" height="3" fill="#FFF"/><rect x="98" y="0" width="1" height="3" fill="#FFF"/><rect x="100" y="0" width="1" height="8" fill="#FFF"/><rect x="104" y="0" width="1" height="3" fill="#FFF"/><rect x="106" y="0" width="1" height="3" fill="#FFF"/><rect x="108" y="0" width="1" height="3" fill="#FFF"/><rect x="110" y="0" width="1" height="8" fill="#FFF"/><rect x="114" y="0" width="1" height="3" fill="#FFF"/><rect x="116" y="0" width="1" height="3" fill="#FFF"/><rect x="118" y="0" width="1" height="3" fill="#FFF"/><rect x="120" y="0" width="1" height="8" fill="#FFF"/><rect x="124" y="0" width="1" height="3" fill="#FFF"/><rect x="126" y="0" width="1" height="3" fill="#FFF"/><rect x="128" y="0" width="1" height="3" fill="#FFF"/><rect x="130" y="0" width="1" height="8" fill="#FFF"/><rect x="134" y="0" width="1" height="3" fill="#FFF"/><rect x="136" y="0" width="1" height="3" fill="#FFF"/><rect x="138" y="0" width="1" height="3" fill="#FFF"/><rect x="140" y="0" width="1" height="8" fill="#FFF"/><rect x="144" y="0" width="1" height="3" fill="#FFF"/><rect x="146" y="0" width="1" height="3" fill="#FFF"/><rect x="148" y="0" width="1" height="3" fill="#FFF"/><rect x="150" y="0" width="1" height="8" fill="#FFF"/><rect x="154" y="0" width="1" height="3" fill="#FFF"/><rect x="156" y="0" width="1" height="3" fill="#FFF"/><rect x="158" y="0" width="1" height="3" fill="#FFF"/><rect x="160" y="0" width="1" height="8" fill="#FFF"/><rect x="164" y="0" width="1" height="3" fill="#FFF"/><rect x="166" y="0" width="1" height="3" fill="#FFF"/><rect x="168" y="0" width="1" height="3" fill="#FFF"/><rect x="170" y="0" width="1" height="8" fill="#FFF"/><rect x="174" y="0" width="1" height="3" fill="#FFF"/><rect x="176" y="0" width="1" height="3" fill="#FFF"/><rect x="178" y="0" width="1" height="3" fill="#FFF"/><rect x="180" y="0" width="1" height="8" fill="#FFF"/><rect x="184" y="0" width="1" height="3" fill="#FFF"/><rect x="186" y="0" width="1" height="3" fill="#FFF"/><rect x="188" y="0" width="1" height="3" fill="#FFF"/><rect x="190" y="0" width="1" height="8" fill="#FFF"/><rect x="194" y="0" width="1" height="3" fill="#FFF"/><rect x="196" y="0" width="1" height="3" fill="#FFF"/><rect x="198" y="0" width="1" height="3" fill="#FFF"/><rect x="200" y="0" width="1" height="8" fill="#FFF"/><rect x="204" y="0" width="1" height="3" fill="#FFF"/><rect x="206" y="0" width="1" height="3" fill="#FFF"/><rect x="208" y="0" width="1" height="3" fill="#FFF"/><rect x="210" y="0" width="1" height="8" fill="#FFF"/><rect x="214" y="0" width="1" height="3" fill="#FFF"/><rect x="216" y="0" width="1" height="3" fill="#FFF"/><rect x="218" y="0" width="1" height="3" fill="#FFF"/><rect x="220" y="0" width="1" height="8" fill="#FFF"/><rect x="224" y="0" width="1" height="3" fill="#FFF"/><rect x="226" y="0" width="1" height="3" fill="#FFF"/><rect x="228" y="0" width="1" height="3" fill="#FFF"/><rect x="230" y="0" width="1" height="8" fill="#FFF"/><rect x="234" y="0" width="1" height="3" fill="#FFF"/><rect x="236" y="0" width="1" height="3" fill="#FFF"/><rect x="238" y="0" width="1" height="3" fill="#FFF"/><rect x="240" y="0" width="1" height="8" fill="#FFF"/><rect x="244" y="0" width="1" height="3" fill="#FFF"/><rect x="246" y="0" width="1" height="3" fill="#FFF"/><rect x="248" y="0" width="1" height="3" fill="#FFF"/><rect x="250" y="0" width="1" height="8" fill="#FFF"/><rect x="254" y="0" width="1" height="3" fill="#FFF"/><rect x="256" y="0" width="1" height="3" fill="#FFF"/><rect x="258" y="0" width="1" height="3" fill="#FFF"/><rect x="260" y="0" width="1" height="8" fill="#FFF"/><rect x="264" y="0" width="1" height="3" fill="#FFF"/><rect x="266" y="0" width="1" height="3" fill="#FFF"/><rect x="268" y="0" width="1" height="3" fill="#FFF"/><rect x="270" y="0" width="1" height="8" fill="#FFF"/><rect x="274" y="0" width="1" height="3" fill="#FFF"/><rect x="276" y="0" width="1" height="3" fill="#FFF"/><rect x="278" y="0" width="1" height="3" fill="#FFF"/><rect x="280" y="0" width="1" height="8" fill="#FFF"/><rect x="284" y="0" width="1" height="3" fill="#FFF"/><rect x="286" y="0" width="1" height="3" fill="#FFF"/><rect x="288" y="0" width="1" height="3" fill="#FFF"/><rect x="290" y="0" width="1" height="8" fill="#FFF"/><rect x="294" y="0" width="1" height="3" fill="#FFF"/><rect x="296" y="0" width="1" height="3" fill="#FFF"/><rect x="298" y="0" width="1" height="3" fill="#FFF"/><rect x="300" y="0" width="1" height="8" fill="#FFF"/><rect x="304" y="0" width="1" height="3" fill="#FFF"/><rect x="306" y="0" width="1" height="3" fill="#FFF"/><rect x="308" y="0" width="1" height="3" fill="#FFF"/><rect x="310" y="0" width="1" height="8" fill="#FFF"/><rect x="314" y="0" width="1" height="3" fill="#FFF"/><rect x="316" y="0" width="1" height="3" fill="#FFF"/><rect x="318" y="0" width="1" height="3" fill="#FFF"/><rect x="320" y="0" width="1" height="8" fill="#FFF"/><rect x="324" y="0" width="1" height="3" fill="#FFF"/><rect x="326" y="0" width="1" height="3" fill="#FFF"/><rect x="328" y="0" width="1" height="3" fill="#FFF"/><rect x="330" y="0" width="1" height="8" fill="#FFF"/><rect x="334" y="0" width="1" height="3" fill="#FFF"/><rect x="336" y="0" width="1" height="3" fill="#FFF"/><rect x="338" y="0" width="1" height="3" fill="#FFF"/><rect x="340" y="0" width="1" height="8" fill="#FFF"/><rect x="344" y="0" width="1" height="3" fill="#FFF"/><rect x="346" y="0" width="1" height="3" fill="#FFF"/><rect x="348" y="0" width="1" height="3" fill="#FFF"/><rect x="350" y="0" width="1" height="8" fill="#FFF"/><rect x="354" y="0" width="1" height="3" fill="#FFF"/><rect x="356" y="0" width="1" height="3" fill="#FFF"/><rect x="358" y="0" width="1" height="3" fill="#FFF"/><rect x="360" y="0" width="1" height="8" fill="#FFF"/><rect x="364" y="0" width="1" height="3" fill="#FFF"/><rect x="366" y="0" width="1" height="3" fill="#FFF"/><rect x="368" y="0" width="1" height="3" fill="#FFF"/><rect x="370" y="0" width="1" height="8" fill="#FFF"/><rect x="374" y="0" width="1" height="3" fill="#FFF"/><rect x="376" y="0" width="1" height="3" fill="#FFF"/><rect x="378" y="0" width="1" height="3" fill="#FFF"/><rect x="380" y="0" width="1" height="8" fill="#FFF"/><rect x="384" y="0" width="1" height="3" fill="#FFF"/><rect x="386" y="0" width="1" height="3" fill="#FFF"/><rect x="388" y="0" width="1" height="3" fill="#FFF"/><rect x="390" y="0" width="1" height="8" fill="#FFF"/><rect x="394" y="0" width="1" height="3" fill="#FFF"/><rect x="396" y="0" width="1" height="3" fill="#FFF"/><rect x="398" y="0" width="1" height="3" fill="#FFF"/><rect x="400" y="0" width="1" height="8" fill="#FFF"/><rect x="404" y="0" width="1" height="3" fill="#FFF"/><rect x="406" y="0" width="1" height="3" fill="#FFF"/><rect x="408" y="0" width="1" height="3" fill="#FFF"/><rect x="410" y="0" width="1" height="8" fill="#FFF"/><rect x="414" y="0" width="1" height="3" fill="#FFF"/><rect x="416" y="0" width="1" height="3" fill="#FFF"/><rect x="418" y="0" width="1" height="3" fill="#FFF"/><rect x="420" y="0" width="1" height="8" fill="#FFF"/><rect x="424" y="0" width="1" height="3" fill="#FFF"/><rect x="426" y="0" width="1" height="3" fill="#FFF"/><rect x="428" y="0" width="1" height="3" fill="#FFF"/><rect x="430" y="0" width="1" height="8" fill="#FFF"/><rect x="434" y="0" width="1" height="3" fill="#FFF"/><rect x="436" y="0" width="1" height="3" fill="#FFF"/><rect x="438" y="0" width="1" height="3" fill="#FFF"/><rect x="440" y="0" width="1" height="8" fill="#FFF"/><rect x="444" y="0" width="1" height="3" fill="#FFF"/><rect x="446" y="0" width="1" height="3" fill="#FFF"/><rect x="448" y="0" width="1" height="3" fill="#FFF"/><rect x="450" y="0" width="1" height="8" fill="#FFF"/><rect x="454" y="0" width="1" height="3" fill="#FFF"/><rect x="456" y="0" width="1" height="3" fill="#FFF"/><rect x="458" y="0" width="1" height="3" fill="#FFF"/><rect x="460" y="0" width="1" height="8" fill="#FFF"/><rect x="464" y="0" width="1" height="3" fill="#FFF"/><rect x="466" y="0" width="1" height="3" fill="#FFF"/><rect x="468" y="0" width="1" height="3" fill="#FFF"/><rect x="470" y="0" width="1" height="8" fill="#FFF"/><rect x="474" y="0" width="1" height="3" fill="#FFF"/><rect x="476" y="0" width="1" height="3" fill="#FFF"/><rect x="478" y="0" width="1" height="3" fill="#FFF"/><rect x="480" y="0" width="1" height="8" fill="#FFF"/><rect x="484" y="0" width="1" height="3" fill="#FFF"/><rect x="486" y="0" width="1" height="3" fill="#FFF"/><rect x="488" y="0" width="1" height="3" fill="#FFF"/><rect x="490" y="0" width="1" height="8" fill="#FFF"/><rect x="494" y="0" width="1" height="3" fill="#FFF"/><rect x="496" y="0" width="1" height="3" fill="#FFF"/><rect x="498" y="0" width="1" height="3" fill="#FFF"/><rect x="500" y="0" width="1" height="8" fill="#FFF"/><rect x="504" y="0" width="1" height="3" fill="#FFF"/><rect x="506" y="0" width="1" height="3" fill="#FFF"/><rect x="508" y="0" width="1" height="3" fill="#FFF"/><rect x="510" y="0" width="1" height="8" fill="#FFF"/><rect x="514" y="0" width="1" height="3" fill="#FFF"/><rect x="516" y="0" width="1" height="3" fill="#FFF"/><rect x="518" y="0" width="1" height="3" fill="#FFF"/><rect x="520" y="0" width="1" height="8" fill="#FFF"/><rect x="524" y="0" width="1" height="3" fill="#FFF"/><rect x="526" y="0" width="1" height="3" fill="#FFF"/><rect x="528" y="0" width="1" height="3" fill="#FFF"/><rect x="530" y="0" width="1" height="8" fill="#FFF"/><rect x="534" y="0" width="1" height="3" fill="#FFF"/><rect x="536" y="0" width="1" height="3" fill="#FFF"/><rect x="538" y="0" width="1" height="3" fill="#FFF"/><rect x="540" y="0" width="1" height="8" fill="#FFF"/><rect x="544" y="0" width="1" height="3" fill="#FFF"/><rect x="546" y="0" width="1" height="3" fill="#FFF"/><rect x="548" y="0" width="1" height="3" fill="#FFF"/><rect x="550" y="0" width="1" height="8" fill="#FFF"/><rect x="554" y="0" width="1" height="3" fill="#FFF"/><rect x="556" y="0" width="1" height="3" fill="#FFF"/><rect x="558" y="0" width="1" height="3" fill="#FFF"/><rect x="560" y="0" width="1" height="8" fill="#FFF"/><rect x="564" y="0" width="1" height="3" fill="#FFF"/><rect x="566" y="0" width="1" height="3" fill="#FFF"/><rect x="568" y="0" width="1" height="3" fill="#FFF"/><rect x="570" y="0" width="1" height="8" fill="#FFF"/><rect x="574" y="0" width="1" height="3" fill="#FFF"/><rect x="576" y="0" width="1" height="3" fill="#FFF"/><rect x="578" y="0" width="1" height="3" fill="#FFF"/><rect x="580" y="0" width="1" height="8" fill="#FFF"/><rect x="584" y="0" width="1" height="3" fill="#FFF"/><rect x="586" y="0" width="1" height="3" fill="#FFF"/><rect x="588" y="0" width="1" height="3" fill="#FFF"/><rect x="590" y="0" width="1" height="8" fill="#FFF"/><rect x="594" y="0" width="1" height="3" fill="#FFF"/><rect x="596" y="0" width="1" height="3" fill="#FFF"/><rect x="598" y="0" width="1" height="3" fill="#FFF"/><rect x="600" y="0" width="1" height="8" fill="#FFF"/><rect x="604" y="0" width="1" height="3" fill="#FFF"/><rect x="606" y="0" width="1" height="3" fill="#FFF"/><rect x="608" y="0" width="1" height="3" fill="#FFF"/><rect x="610" y="0" width="1" height="8" fill="#FFF"/><rect x="614" y="0" width="1" height="3" fill="#FFF"/><rect x="616" y="0" width="1" height="3" fill="#FFF"/><rect x="618" y="0" width="1" height="3" fill="#FFF"/><rect x="620" y="0" width="1" height="8" fill="#FFF"/><rect x="624" y="0" width="1" height="3" fill="#FFF"/><rect x="626" y="0" width="1" height="3" fill="#FFF"/><rect x="628" y="0" width="1" height="3" fill="#FFF"/><rect x="630" y="0" width="1" height="8" fill="#FFF"/><rect x="634" y="0" width="1" height="3" fill="#FFF"/><rect x="636" y="0" width="1" height="3" fill="#FFF"/><rect x="638" y="0" width="1" height="3" fill="#FFF"/><rect x="640" y="0" width="1" height="8" fill="#FFF"/><rect x="644" y="0" width="1" height="3" fill="#FFF"/><rect x="646" y="0" width="1" height="3" fill="#FFF"/><rect x="648" y="0" width="1" height="3" fill="#FFF"/><rect x="650" y="0" width="1" height="8" fill="#FFF"/><rect x="654" y="0" width="1" height="3" fill="#FFF"/><rect x="656" y="0" width="1" height="3" fill="#FFF"/><rect x="658" y="0" width="1" height="3" fill="#FFF"/><rect x="660" y="0" width="1" height="8" fill="#FFF"/><rect x="664" y="0" width="1" height="3" fill="#FFF"/><rect x="666" y="0" width="1" height="3" fill="#FFF"/></svg>
<div class="a" style="left:541px;top:498px;width:707px;height:1px;background:#000"></div>
<div class="a" style="left:541px;top:499px;width:1px;height:14px;background:#000"></div>
<div class="t" style="left:546px;top:501px;font-size:11px">1</div>
<div class="a" style="left:581px;top:499px;width:1px;height:14px;background:#000"></div>
<div class="t" style="left:586px;top:501px;font-size:11px">5</div>
<div class="a" style="left:621px;top:499px;width:1px;height:14px;background:#000"></div>
<div class="t" style="left:626px;top:501px;font-size:11px">9</div>
<div class="a" style="left:661px;top:499px;width:1px;height:14px;background:#000"></div>
<div class="t" style="left:666px;top:501px;font-size:11px">13</div>
<div class="a" style="left:701px;top:499px;width:1px;height:14px;background:#000"></div>
<div class="t" style="left:706px;top:501px;font-size:11px">17</div>
<div class="a" style="left:741px;top:499px;width:1px;height:14px;background:#000"></div>
<div class="t" style="left:746px;top:501px;font-size:11px">21</div>
<div class="a" style="left:781px;top:499px;width:1px;height:14px;background:#000"></div>
<div class="t" style="left:786px;top:501px;font-size:11px">25</div>
<div class="a" style="left:821px;top:499px;width:1px;height:14px;background:#000"></div>
<div class="t" style="left:826px;top:501px;font-size:11px">29</div>
<div class="a" style="left:861px;top:499px;width:1px;height:14px;background:#000"></div>
<div class="t" style="left:866px;top:501px;font-size:11px">33</div>
<div class="a" style="left:901px;top:499px;width:1px;height:14px;background:#000"></div>
<div class="t" style="left:906px;top:501px;font-size:11px">37</div>
<div class="a" style="left:941px;top:499px;width:1px;height:14px;background:#000"></div>
<div class="t" style="left:946px;top:501px;font-size:11px">41</div>
<div class="a" style="left:981px;top:499px;width:1px;height:14px;background:#000"></div>
<div class="t" style="left:986px;top:501px;font-size:11px">45</div>
<div class="a" style="left:1021px;top:499px;width:1px;height:14px;background:#000"></div>
<div class="t" style="left:1026px;top:501px;font-size:11px">49</div>
<div class="a" style="left:1061px;top:499px;width:1px;height:14px;background:#000"></div>
<div class="t" style="left:1066px;top:501px;font-size:11px">53</div>
<div class="a" style="left:1101px;top:499px;width:1px;height:14px;background:#000"></div>
<div class="t" style="left:1106px;top:501px;font-size:11px">57</div>
<div class="a" style="left:1141px;top:499px;width:1px;height:14px;background:#000"></div>
<div class="t" style="left:1146px;top:501px;font-size:11px">61</div>
<div class="a" style="left:1181px;top:499px;width:1px;height:14px;background:#000"></div>
<div class="t" style="left:1186px;top:501px;font-size:11px">65</div>
<div class="a" style="left:552px;top:125px;width:641px;height:26px;background:#C4D080;border:1px solid #000;border-top-width:2px;border-bottom-width:2px"></div>
<div class="a" style="left:592px;top:150px;width:601px;height:25px;background:#C4D080;border:1px solid #000;border-bottom-width:2px"></div>
<div class="a" style="left:632px;top:174px;width:521px;height:25px;background:#C4D080;border:1px solid #000;border-bottom-width:2px"></div>
<div class="a" style="left:712px;top:198px;width:281px;height:25px;background:#C4D080;border:1px solid #000;border-bottom-width:2px"></div>
<div class="a" style="left:552px;top:222px;width:641px;height:25px;background:#636B40;border:1px solid #000;border-bottom-width:2px"></div>
<div class="a" style="left:552px;top:246px;width:641px;height:25px;background:#C4D080;border:1px solid #000;border-bottom-width:2px"></div>
<div class="a" style="left:552px;top:270px;width:641px;height:24px;background:#C4D080;border:1px solid #000;border-bottom-width:2px"></div>
<div class="a" style="left:592px;top:293px;width:601px;height:25px;background:#C4D080;border:1px solid #000;border-bottom-width:2px"></div>
<div class="a" style="left:632px;top:317px;width:561px;height:25px;background:#C4D080;border:1px solid #000;border-bottom-width:2px"></div>
<div class="a" style="left:872px;top:341px;width:121px;height:25px;background:#C4D080;border:1px solid #000;border-bottom-width:2px"></div>
<svg class="a" style="left:0;top:0" width="1265" height="565"><rect x="552" y="136.5" width="4" height="1.6" fill="#FFF"/><rect x="556" y="137" width="7" height="1.6" fill="#FFF"/><rect x="563" y="136.5" width="5" height="1.6" fill="#FFF"/><rect x="568" y="136.5" width="6" height="1.6" fill="#FFF"/><rect x="574" y="136.5" width="3" height="1.6" fill="#FFF"/><rect x="577" y="138" width="3" height="1.6" fill="#FFF"/><rect x="580" y="136.5" width="5" height="1.6" fill="#FFF"/><rect x="585" y="137" width="4" height="1.6" fill="#FFF"/><rect x="589" y="138" width="8" height="1.6" fill="#FFF"/><rect x="597" y="136.5" width="7" height="1.6" fill="#FFF"/><rect x="604" y="138" width="6" height="1.6" fill="#FFF"/><rect x="610" y="137" width="8" height="1.6" fill="#FFF"/><rect x="618" y="137" width="4" height="1.6" fill="#FFF"/><rect x="622" y="136.5" width="9" height="1.6" fill="#FFF"/><rect x="631" y="137" width="6" height="1.6" fill="#FFF"/><rect x="637" y="137" width="8" height="1.6" fill="#FFF"/><rect x="645" y="136.5" width="4" height="1.6" fill="#FFF"/><rect x="649" y="138" width="3" height="1.6" fill="#FFF"/><rect x="652" y="137" width="9" height="1.6" fill="#FFF"/><rect x="661" y="138" width="9" height="1.6" fill="#FFF"/><rect x="670" y="136.5" width="6" height="1.6" fill="#FFF"/><rect x="676" y="138" width="8" height="1.6" fill="#FFF"/><rect x="684" y="138" width="8" height="1.6" fill="#FFF"/><rect x="692" y="136.5" width="6" height="1.6" fill="#FFF"/><rect x="698" y="137" width="6" height="1.6" fill="#FFF"/><rect x="704" y="137" width="5" height="1.6" fill="#FFF"/><rect x="709" y="137" width="3" height="1.6" fill="#FFF"/><rect x="712" y="137" width="6" height="1.6" fill="#FFF"/><rect x="718" y="138" width="5" height="1.6" fill="#FFF"/><rect x="723" y="138" width="9" height="1.6" fill="#FFF"/><rect x="732" y="136.5" width="6" height="1.6" fill="#FFF"/><rect x="738" y="138" width="9" height="1.6" fill="#FFF"/><rect x="747" y="138" width="7" height="1.6" fill="#FFF"/><rect x="754" y="136.5" width="7" height="1.6" fill="#FFF"/><rect x="761" y="136.5" width="6" height="1.6" fill="#FFF"/><rect x="767" y="138" width="4" height="1.6" fill="#FFF"/><rect x="771" y="137" width="8" height="1.6" fill="#FFF"/><rect x="779" y="138" width="9" height="1.6" fill="#FFF"/><rect x="788" y="137" width="7" height="1.6" fill="#FFF"/><rect x="795" y="138" width="8" height="1.6" fill="#FFF"/><rect x="803" y="136.5" width="7" height="1.6" fill="#FFF"/><rect x="810" y="137" width="7" height="1.6" fill="#FFF"/><rect x="817" y="137" width="8" height="1.6" fill="#FFF"/><rect x="825" y="136.5" width="8" height="1.6" fill="#FFF"/><rect x="833" y="138" width="5" height="1.6" fill="#FFF"/><rect x="838" y="137" width="3" height="1.6" fill="#FFF"/><rect x="841" y="138" width="6" height="1.6" fill="#FFF"/><rect x="847" y="138" width="3" height="1.6" fill="#FFF"/><rect x="850" y="137" width="9" height="1.6" fill="#FFF"/><rect x="859" y="137" width="6" height="1.6" fill="#FFF"/><rect x="865" y="138" width="3" height="1.6" fill="#FFF"/><rect x="868" y="138" width="6" height="1.6" fill="#FFF"/><rect x="874" y="137" width="9" height="1.6" fill="#FFF"/><rect x="883" y="136.5" width="3" height="1.6" fill="#FFF"/><rect x="886" y="137" width="7" height="1.6" fill="#FFF"/><rect x="893" y="136.5" width="6" height="1.6" fill="#FFF"/><rect x="899" y="136.5" width="5" height="1.6" fill="#FFF"/><rect x="904" y="136.5" width="5" height="1.6" fill="#FFF"/><rect x="909" y="137" width="4" height="1.6" fill="#FFF"/><rect x="913" y="137" width="5" height="1.6" fill="#FFF"/><rect x="918" y="137" width="3" height="1.6" fill="#FFF"/><rect x="921" y="136.5" width="7" height="1.6" fill="#FFF"/><rect x="928" y="137" width="3" height="1.6" fill="#FFF"/><rect x="931" y="138" width="6" height="1.6" fill="#FFF"/><rect x="937" y="138" width="7" height="1.6" fill="#FFF"/><rect x="944" y="137" width="4" height="1.6" fill="#FFF"/><rect x="948" y="138" width="9" height="1.6" fill="#FFF"/><rect x="957" y="138" width="5" height="1.6" fill="#FFF"/><rect x="962" y="138" width="4" height="1.6" fill="#FFF"/><rect x="966" y="138" width="6" height="1.6" fill="#FFF"/><rect x="972" y="136.5" width="9" height="1.6" fill="#FFF"/><rect x="981" y="136.5" width="6" height="1.6" fill="#FFF"/><rect x="987" y="136.5" width="8" height="1.6" fill="#FFF"/><rect x="995" y="136.5" width="3" height="1.6" fill="#FFF"/><rect x="998" y="136.5" width="9" height="1.6" fill="#FFF"/><rect x="1007" y="138" width="5" height="1.6" fill="#FFF"/><rect x="1012" y="137" width="8" height="1.6" fill="#FFF"/><rect x="1020" y="138" width="5" height="1.6" fill="#FFF"/><rect x="1025" y="136.5" width="5" height="1.6" fill="#FFF"/><rect x="1030" y="136.5" width="5" height="1.6" fill="#FFF"/><rect x="1035" y="137" width="5" height="1.6" fill="#FFF"/><rect x="1040" y="138" width="9" height="1.6" fill="#FFF"/><rect x="1049" y="138" width="7" height="1.6" fill="#FFF"/><rect x="1056" y="138" width="3" height="1.6" fill="#FFF"/><rect x="1059" y="136.5" width="7" height="1.6" fill="#FFF"/><rect x="1066" y="137" width="8" height="1.6" fill="#FFF"/><rect x="1074" y="138" width="3" height="1.6" fill="#FFF"/><rect x="1077" y="138" width="6" height="1.6" fill="#FFF"/><rect x="1083" y="138" width="8" height="1.6" fill="#FFF"/><rect x="1091" y="138" width="7" height="1.6" fill="#FFF"/><rect x="1098" y="138" width="8" height="1.6" fill="#FFF"/><rect x="1106" y="136.5" width="3" height="1.6" fill="#FFF"/><rect x="1109" y="137" width="3" height="1.6" fill="#FFF"/><rect x="1112" y="138" width="5" height="1.6" fill="#FFF"/><rect x="1117" y="138" width="8" height="1.6" fill="#FFF"/><rect x="1125" y="136.5" width="5" height="1.6" fill="#FFF"/><rect x="1130" y="138" width="7" height="1.6" fill="#FFF"/><rect x="1137" y="138" width="4" height="1.6" fill="#FFF"/><rect x="1141" y="138" width="4" height="1.6" fill="#FFF"/><rect x="1145" y="138" width="9" height="1.6" fill="#FFF"/><rect x="1154" y="136.5" width="9" height="1.6" fill="#FFF"/><rect x="1163" y="138" width="5" height="1.6" fill="#FFF"/><rect x="1168" y="138" width="9" height="1.6" fill="#FFF"/><rect x="1177" y="137" width="3" height="1.6" fill="#FFF"/><rect x="1180" y="137" width="7" height="1.6" fill="#FFF"/><rect x="1187" y="136.5" width="5" height="1.6" fill="#FFF"/><rect x="752" y="160.5" width="7" height="2" fill="#FFF"/><rect x="759" y="159.5" width="9" height="2" fill="#FFF"/><rect x="768" y="160.5" width="1" height="2" fill="#FFF"/><rect x="769" y="161.5" width="8" height="2" fill="#FFF"/><rect x="777" y="160.5" width="15" height="2" fill="#FFF"/><rect x="832" y="159.5" width="2" height="2" fill="#FFF"/><rect x="834" y="160.5" width="2" height="2" fill="#FFF"/><rect x="836" y="159.5" width="2" height="2" fill="#FFF"/><rect x="838" y="160.5" width="1" height="2" fill="#FFF"/><rect x="839" y="161.5" width="2" height="2" fill="#FFF"/><rect x="841" y="160.5" width="1" height="2" fill="#FFF"/><rect x="842" y="159.5" width="1" height="2" fill="#FFF"/><rect x="843" y="160.5" width="1" height="2" fill="#FFF"/><rect x="844" y="161.5" width="2" height="2" fill="#FFF"/><rect x="846" y="160.5" width="1" height="2" fill="#FFF"/><rect x="847" y="159.5" width="1" height="2" fill="#FFF"/><rect x="848" y="160.5" width="1" height="2" fill="#FFF"/><rect x="849" y="161.5" width="2" height="2" fill="#FFF"/><rect x="851" y="160.5" width="1" height="2" fill="#FFF"/><rect x="852" y="159.5" width="1" height="2" fill="#FFF"/><rect x="853" y="160.5" width="1" height="2" fill="#FFF"/><rect x="854" y="161.5" width="2" height="2" fill="#FFF"/><rect x="856" y="160.5" width="1" height="2" fill="#FFF"/><rect x="857" y="159.5" width="1" height="2" fill="#FFF"/><rect x="858" y="160.5" width="1" height="2" fill="#FFF"/><rect x="859" y="161.5" width="2" height="2" fill="#FFF"/><rect x="861" y="160.5" width="1" height="2" fill="#FFF"/><rect x="862" y="159.5" width="2" height="2" fill="#FFF"/><rect x="864" y="160.5" width="1" height="2" fill="#FFF"/><rect x="865" y="161.5" width="2" height="2" fill="#FFF"/><rect x="867" y="160.5" width="1" height="2" fill="#FFF"/><rect x="868" y="159.5" width="4" height="2" fill="#FFF"/><rect x="912" y="160.5" width="7" height="2" fill="#FFF"/><rect x="919" y="159.5" width="9" height="2" fill="#FFF"/><rect x="928" y="160.5" width="1" height="2" fill="#FFF"/><rect x="929" y="161.5" width="8" height="2" fill="#FFF"/><rect x="937" y="160.5" width="15" height="2" fill="#FFF"/><rect x="992" y="159.5" width="2" height="2" fill="#FFF"/><rect x="994" y="160.5" width="2" height="2" fill="#FFF"/><rect x="996" y="159.5" width="2" height="2" fill="#FFF"/><rect x="998" y="160.5" width="1" height="2" fill="#FFF"/><rect x="999" y="161.5" width="2" height="2" fill="#FFF"/><rect x="1001" y="160.5" width="1" height="2" fill="#FFF"/><rect x="1002" y="159.5" width="1" height="2" fill="#FFF"/><rect x="1003" y="160.5" width="1" height="2" fill="#FFF"/><rect x="1004" y="161.5" width="2" height="2" fill="#FFF"/><rect x="1006" y="160.5" width="1" height="2" fill="#FFF"/><rect x="1007" y="159.5" width="1" height="2" fill="#FFF"/><rect x="1008" y="160.5" width="1" height="2" fill="#FFF"/><rect x="1009" y="161.5" width="2" height="2" fill="#FFF"/><rect x="1011" y="160.5" width="1" height="2" fill="#FFF"/><rect x="1012" y="159.5" width="1" height="2" fill="#FFF"/><rect x="1013" y="160.5" width="1" height="2" fill="#FFF"/><rect x="1014" y="161.5" width="2" height="2" fill="#FFF"/><rect x="1016" y="160.5" width="1" height="2" fill="#FFF"/><rect x="1017" y="159.5" width="1" height="2" fill="#FFF"/><rect x="1018" y="160.5" width="1" height="2" fill="#FFF"/><rect x="1019" y="161.5" width="2" height="2" fill="#FFF"/><rect x="1021" y="160.5" width="1" height="2" fill="#FFF"/><rect x="1022" y="159.5" width="2" height="2" fill="#FFF"/><rect x="1024" y="160.5" width="1" height="2" fill="#FFF"/><rect x="1025" y="161.5" width="2" height="2" fill="#FFF"/><rect x="1027" y="160.5" width="1" height="2" fill="#FFF"/><rect x="1028" y="159.5" width="4" height="2" fill="#FFF"/><rect x="1072" y="160.5" width="7" height="2" fill="#FFF"/><rect x="1079" y="159.5" width="9" height="2" fill="#FFF"/><rect x="1088" y="160.5" width="1" height="2" fill="#FFF"/><rect x="1089" y="161.5" width="8" height="2" fill="#FFF"/><rect x="1097" y="160.5" width="15" height="2" fill="#FFF"/><rect x="1152" y="159.5" width="2" height="2" fill="#FFF"/><rect x="1154" y="160.5" width="2" height="2" fill="#FFF"/><rect x="1156" y="159.5" width="2" height="2" fill="#FFF"/><rect x="1158" y="160.5" width="1" height="2" fill="#FFF"/><rect x="1159" y="161.5" width="2" height="2" fill="#FFF"/><rect x="1161" y="160.5" width="1" height="2" fill="#FFF"/><rect x="1162" y="159.5" width="1" height="2" fill="#FFF"/><rect x="1163" y="160.5" width="1" height="2" fill="#FFF"/><rect x="1164" y="161.5" width="2" height="2" fill="#FFF"/><rect x="1166" y="160.5" width="1" height="2" fill="#FFF"/><rect x="1167" y="159.5" width="1" height="2" fill="#FFF"/><rect x="1168" y="160.5" width="1" height="2" fill="#FFF"/><rect x="1169" y="161.5" width="2" height="2" fill="#FFF"/><rect x="1171" y="160.5" width="1" height="2" fill="#FFF"/><rect x="1172" y="159.5" width="1" height="2" fill="#FFF"/><rect x="1173" y="160.5" width="1" height="2" fill="#FFF"/><rect x="1174" y="161.5" width="2" height="2" fill="#FFF"/><rect x="1176" y="160.5" width="1" height="2" fill="#FFF"/><rect x="1177" y="159.5" width="1" height="2" fill="#FFF"/><rect x="1178" y="160.5" width="1" height="2" fill="#FFF"/><rect x="1179" y="161.5" width="2" height="2" fill="#FFF"/><rect x="1181" y="160.5" width="1" height="2" fill="#FFF"/><rect x="1182" y="159.5" width="2" height="2" fill="#FFF"/><rect x="1184" y="160.5" width="1" height="2" fill="#FFF"/><rect x="1185" y="161.5" width="2" height="2" fill="#FFF"/><rect x="1187" y="160.5" width="1" height="2" fill="#FFF"/><rect x="1188" y="159.5" width="4" height="2" fill="#FFF"/><rect x="593" y="160" width="3" height="2" fill="#FFF"/><rect x="1112" y="183" width="40" height="2" fill="#FFF"/><rect x="633" y="183" width="3" height="2" fill="#FFF"/><rect x="872" y="206.5" width="1" height="1.6" fill="#FFF"/><rect x="873" y="207.3" width="1" height="1.6" fill="#FFF"/><rect x="874" y="208.1" width="1" height="1.6" fill="#FFF"/><rect x="875" y="208.9" width="1" height="1.6" fill="#FFF"/><rect x="876" y="208.1" width="1" height="1.6" fill="#FFF"/><rect x="877" y="207.3" width="1" height="1.6" fill="#FFF"/><rect x="878" y="208.1" width="1" height="1.6" fill="#FFF"/><rect x="879" y="206.5" width="1" height="1.6" fill="#FFF"/><rect x="880" y="207.3" width="1" height="1.6" fill="#FFF"/><rect x="881" y="206.5" width="1" height="1.6" fill="#FFF"/><rect x="882" y="206.5" width="1" height="1.6" fill="#FFF"/><rect x="883" y="207.3" width="1" height="1.6" fill="#FFF"/><rect x="884" y="208.1" width="1" height="1.6" fill="#FFF"/><rect x="885" y="208.9" width="1" height="1.6" fill="#FFF"/><rect x="886" y="206.5" width="1" height="1.6" fill="#FFF"/><rect x="887" y="207.3" width="1" height="1.6" fill="#FFF"/><rect x="888" y="208.1" width="1" height="1.6" fill="#FFF"/><rect x="889" y="208.9" width="1" height="1.6" fill="#FFF"/><rect x="890" y="207.3" width="1" height="1.6" fill="#FFF"/><rect x="891" y="206.5" width="1" height="1.6" fill="#FFF"/><rect x="892" y="206.5" width="1" height="1.6" fill="#FFF"/><rect x="893" y="206.5" width="1" height="1.6" fill="#FFF"/><rect x="894" y="208.1" width="1" height="1.6" fill="#FFF"/><rect x="895" y="208.9" width="1" height="1.6" fill="#FFF"/><rect x="896" y="208.1" width="1" height="1.6" fill="#FFF"/><rect x="897" y="207.3" width="1" height="1.6" fill="#FFF"/><rect x="898" y="208.1" width="1" height="1.6" fill="#FFF"/><rect x="899" y="208.9" width="1" height="1.6" fill="#FFF"/><rect x="900" y="206.5" width="1" height="1.6" fill="#FFF"/><rect x="901" y="206.5" width="1" height="1.6" fill="#FFF"/><rect x="902" y="206.5" width="1" height="1.6" fill="#FFF"/><rect x="903" y="207.3" width="1" height="1.6" fill="#FFF"/><rect x="904" y="208.1" width="1" height="1.6" fill="#FFF"/><rect x="905" y="208.9" width="1" height="1.6" fill="#FFF"/><rect x="906" y="208.1" width="1" height="1.6" fill="#FFF"/><rect x="907" y="206.5" width="1" height="1.6" fill="#FFF"/><rect x="908" y="208.1" width="1" height="1.6" fill="#FFF"/><rect x="952" y="206.5" width="1" height="1.6" fill="#FFF"/><rect x="953" y="207.3" width="1" height="1.6" fill="#FFF"/><rect x="954" y="208.1" width="1" height="1.6" fill="#FFF"/><rect x="955" y="208.9" width="1" height="1.6" fill="#FFF"/><rect x="956" y="208.1" width="1" height="1.6" fill="#FFF"/><rect x="957" y="207.3" width="1" height="1.6" fill="#FFF"/><rect x="958" y="208.1" width="1" height="1.6" fill="#FFF"/><rect x="959" y="206.5" width="1" height="1.6" fill="#FFF"/><rect x="960" y="207.3" width="1" height="1.6" fill="#FFF"/><rect x="961" y="206.5" width="1" height="1.6" fill="#FFF"/><rect x="962" y="206.5" width="1" height="1.6" fill="#FFF"/><rect x="963" y="207.3" width="1" height="1.6" fill="#FFF"/><rect x="964" y="208.1" width="1" height="1.6" fill="#FFF"/><rect x="965" y="208.9" width="1" height="1.6" fill="#FFF"/><rect x="966" y="206.5" width="1" height="1.6" fill="#FFF"/><rect x="967" y="207.3" width="1" height="1.6" fill="#FFF"/><rect x="968" y="208.1" width="1" height="1.6" fill="#FFF"/><rect x="969" y="208.9" width="1" height="1.6" fill="#FFF"/><rect x="970" y="207.3" width="1" height="1.6" fill="#FFF"/><rect x="971" y="206.5" width="1" height="1.6" fill="#FFF"/><rect x="972" y="206.5" width="1" height="1.6" fill="#FFF"/><rect x="973" y="206.5" width="1" height="1.6" fill="#FFF"/><rect x="974" y="208.1" width="1" height="1.6" fill="#FFF"/><rect x="975" y="208.9" width="1" height="1.6" fill="#FFF"/><rect x="976" y="208.1" width="1" height="1.6" fill="#FFF"/><rect x="977" y="207.3" width="1" height="1.6" fill="#FFF"/><rect x="978" y="208.1" width="1" height="1.6" fill="#FFF"/><rect x="979" y="208.9" width="1" height="1.6" fill="#FFF"/><rect x="980" y="206.5" width="1" height="1.6" fill="#FFF"/><rect x="981" y="206.5" width="1" height="1.6" fill="#FFF"/><rect x="982" y="206.5" width="1" height="1.6" fill="#FFF"/><rect x="983" y="207.3" width="1" height="1.6" fill="#FFF"/><rect x="984" y="208.1" width="1" height="1.6" fill="#FFF"/><rect x="985" y="208.9" width="1" height="1.6" fill="#FFF"/><rect x="986" y="208.1" width="1" height="1.6" fill="#FFF"/><rect x="987" y="206.5" width="1" height="1.6" fill="#FFF"/><rect x="988" y="208.1" width="1" height="1.6" fill="#FFF"/><rect x="713" y="207" width="3" height="2" fill="#FFF"/><rect x="553" y="235.5" width="4" height="6" fill="#FFF"/><rect x="561" y="235.5" width="6" height="6" fill="#FFF"/><rect x="569" y="235.5" width="10" height="2.5" fill="#FFF"/><rect x="569" y="238.5" width="10" height="3" fill="#FFF"/><rect x="581" y="233.5" width="5" height="2.5" fill="#FFF"/><rect x="581" y="238.5" width="5" height="3" fill="#FFF"/><rect x="589" y="235.5" width="9" height="6" fill="#FFF"/><rect x="600" y="235.5" width="5" height="2.5" fill="#FFF"/><rect x="600" y="239" width="5" height="2.5" fill="#FFF"/><rect x="609" y="235.5" width="9" height="2.5" fill="#FFF"/><rect x="609" y="239" width="9" height="2.5" fill="#FFF"/><rect x="619" y="235.5" width="8" height="2.5" fill="#FFF"/><rect x="619" y="239" width="8" height="2.5" fill="#FFF"/><rect x="633" y="235.5" width="3" height="2.5" fill="#FFF"/><rect x="633" y="239" width="3" height="2.5" fill="#FFF"/><rect x="639" y="235.5" width="2" height="6" fill="#FFF"/><rect x="642" y="233.5" width="3" height="2.5" fill="#FFF"/><rect x="642" y="238.5" width="3" height="3" fill="#FFF"/><rect x="649" y="235.5" width="4" height="2.5" fill="#FFF"/><rect x="649" y="239" width="4" height="2.5" fill="#FFF"/><rect x="656" y="235.5" width="9" height="6" fill="#FFF"/><rect x="667" y="235.5" width="2" height="6" fill="#FFF"/><rect x="671" y="233.5" width="3" height="2.5" fill="#FFF"/><rect x="671" y="238.5" width="3" height="3" fill="#FFF"/><rect x="680" y="235.5" width="3" height="6" fill="#FFF"/><rect x="687" y="235.5" width="9" height="6" fill="#FFF"/><rect x="698" y="235.5" width="9" height="6" fill="#FFF"/><rect x="711" y="235.5" width="9" height="6" fill="#FFF"/><rect x="724" y="235.5" width="9" height="6" fill="#FFF"/><rect x="734" y="235.5" width="4" height="2.5" fill="#FFF"/><rect x="734" y="239" width="4" height="2.5" fill="#FFF"/><rect x="742" y="235.5" width="2" height="6" fill="#FFF"/><rect x="749" y="235.5" width="5" height="2.5" fill="#FFF"/><rect x="749" y="239" width="5" height="2.5" fill="#FFF"/><rect x="757" y="235.5" width="3" height="6" fill="#FFF"/><rect x="762" y="234.5" width="8" height="2.5" fill="#FFF"/><rect x="762" y="238.5" width="8" height="3" fill="#FFF"/><rect x="773" y="235.5" width="6" height="6" fill="#FFF"/><rect x="781" y="233.5" width="3" height="2.5" fill="#FFF"/><rect x="781" y="238.5" width="3" height="3" fill="#FFF"/><rect x="788" y="235.5" width="8" height="6" fill="#FFF"/><rect x="797" y="235.5" width="5" height="6" fill="#FFF"/><rect x="804" y="234.5" width="2" height="2.5" fill="#FFF"/><rect x="804" y="238.5" width="2" height="3" fill="#FFF"/><rect x="811" y="235.5" width="9" height="2.5" fill="#FFF"/><rect x="811" y="239" width="9" height="2.5" fill="#FFF"/><rect x="822" y="235.5" width="4" height="2.5" fill="#FFF"/><rect x="822" y="239" width="4" height="2.5" fill="#FFF"/><rect x="830" y="234.5" width="9" height="2.5" fill="#FFF"/><rect x="830" y="238.5" width="9" height="3" fill="#FFF"/><rect x="840" y="235.5" width="6" height="6" fill="#FFF"/><rect x="849" y="235.5" width="6" height="6" fill="#FFF"/><rect x="857" y="235.5" width="4" height="6" fill="#FFF"/><rect x="864" y="235.5" width="4" height="2.5" fill="#FFF"/><rect x="864" y="238.5" width="4" height="3" fill="#FFF"/><rect x="874" y="235.5" width="10" height="6" fill="#FFF"/><rect x="886" y="235.5" width="10" height="6" fill="#FFF"/><rect x="898" y="234.5" width="8" height="2.5" fill="#FFF"/><rect x="898" y="238.5" width="8" height="3" fill="#FFF"/><rect x="911" y="235.5" width="9" height="6" fill="#FFF"/><rect x="924" y="235.5" width="6" height="6" fill="#FFF"/><rect x="935" y="235.5" width="6" height="6" fill="#FFF"/><rect x="947" y="235.5" width="2" height="6" fill="#FFF"/><rect x="951" y="235.5" width="2" height="6" fill="#FFF"/><rect x="956" y="235.5" width="5" height="2.5" fill="#FFF"/><rect x="956" y="238.5" width="5" height="3" fill="#FFF"/><rect x="965" y="235.5" width="6" height="2.5" fill="#FFF"/><rect x="965" y="239" width="6" height="2.5" fill="#FFF"/><rect x="973" y="235.5" width="4" height="6" fill="#FFF"/><rect x="981" y="235.5" width="3" height="6" fill="#FFF"/><rect x="990" y="233.5" width="10" height="2.5" fill="#FFF"/><rect x="990" y="238.5" width="10" height="3" fill="#FFF"/><rect x="1001" y="235.5" width="6" height="6" fill="#FFF"/><rect x="1012" y="235.5" width="8" height="6" fill="#FFF"/><rect x="1022" y="235.5" width="4" height="6" fill="#FFF"/><rect x="1030" y="235.5" width="5" height="2.5" fill="#FFF"/><rect x="1030" y="239" width="5" height="2.5" fill="#FFF"/><rect x="1040" y="235.5" width="2" height="2.5" fill="#FFF"/><rect x="1040" y="239" width="2" height="2.5" fill="#FFF"/><rect x="1047" y="233.5" width="2" height="2.5" fill="#FFF"/><rect x="1047" y="238.5" width="2" height="3" fill="#FFF"/><rect x="1053" y="234.5" width="10" height="2.5" fill="#FFF"/><rect x="1053" y="238.5" width="10" height="3" fill="#FFF"/><rect x="1068" y="233.5" width="4" height="2.5" fill="#FFF"/><rect x="1068" y="238.5" width="4" height="3" fill="#FFF"/><rect x="1075" y="235.5" width="8" height="2.5" fill="#FFF"/><rect x="1075" y="239" width="8" height="2.5" fill="#FFF"/><rect x="1085" y="235.5" width="9" height="6" fill="#FFF"/><rect x="1100" y="235.5" width="6" height="2.5" fill="#FFF"/><rect x="1100" y="238.5" width="6" height="3" fill="#FFF"/><rect x="1110" y="235.5" width="3" height="2.5" fill="#FFF"/><rect x="1110" y="239" width="3" height="2.5" fill="#FFF"/><rect x="1114" y="234.5" width="8" height="2.5" fill="#FFF"/><rect x="1114" y="238.5" width="8" height="3" fill="#FFF"/><rect x="1125" y="235.5" width="5" height="6" fill="#FFF"/><rect x="1133" y="235.5" width="5" height="6" fill="#FFF"/><rect x="1141" y="235.5" width="9" height="6" fill="#FFF"/><rect x="1151" y="235.5" width="3" height="2.5" fill="#FFF"/><rect x="1151" y="239" width="3" height="2.5" fill="#FFF"/><rect x="1158" y="235.5" width="2" height="2.5" fill="#FFF"/><rect x="1158" y="239" width="2" height="2.5" fill="#FFF"/><rect x="1166" y="235.5" width="10" height="6" fill="#FFF"/><rect x="1181" y="233.5" width="9" height="2.5" fill="#FFF"/><rect x="1181" y="238.5" width="9" height="3" fill="#FFF"/><rect x="556" y="236.5" width="4" height="3.5" fill="#FFF"/><rect x="560" y="236.5" width="10" height="3.5" fill="#FFF"/><rect x="570" y="237.5" width="6" height="3.5" fill="#FFF"/><rect x="576" y="238.0" width="10" height="3.5" fill="#FFF"/><rect x="586" y="237.5" width="10" height="3.5" fill="#FFF"/><rect x="596" y="237.5" width="4" height="3.5" fill="#FFF"/><rect x="620" y="237.5" width="10" height="3.5" fill="#FFF"/><rect x="630" y="236.5" width="10" height="3.5" fill="#FFF"/><rect x="640" y="236.5" width="4" height="3.5" fill="#FFF"/><rect x="644" y="236.5" width="10" height="3.5" fill="#FFF"/><rect x="654" y="237.5" width="10" height="3.5" fill="#FFF"/><rect x="664" y="237.5" width="6" height="3.5" fill="#FFF"/><rect x="670" y="236.5" width="8" height="3.5" fill="#FFF"/><rect x="678" y="237.5" width="2" height="3.5" fill="#FFF"/><rect x="1080" y="237.5" width="10" height="3.5" fill="#FFF"/><rect x="1090" y="238.0" width="10" height="3.5" fill="#FFF"/><rect x="1100" y="236.5" width="4" height="3.5" fill="#FFF"/><rect x="1104" y="236.5" width="8" height="3.5" fill="#FFF"/><rect x="1112" y="237.5" width="8" height="3.5" fill="#FFF"/><rect x="1120" y="236.5" width="6" height="3.5" fill="#FFF"/><rect x="1126" y="236.5" width="6" height="3.5" fill="#FFF"/><rect x="1132" y="238.0" width="8" height="3.5" fill="#FFF"/><rect x="1140" y="238.0" width="10" height="3.5" fill="#FFF"/><rect x="1150" y="236.5" width="10" height="3.5" fill="#FFF"/><rect x="1160" y="238.0" width="6" height="3.5" fill="#FFF"/><rect x="1166" y="236.5" width="10" height="3.5" fill="#FFF"/><rect x="1176" y="237.5" width="8" height="3.5" fill="#FFF"/><rect x="1184" y="237.5" width="6" height="3.5" fill="#FFF"/><rect x="553" y="259" width="12" height="8" fill="#FFF"/><rect x="553" y="265" width="12" height="1" fill="#D8E0A8"/><rect x="565" y="257" width="8" height="9" fill="#FFF"/><rect x="565" y="263" width="8" height="1" fill="#D8E0A8"/><rect x="573" y="257" width="7" height="10" fill="#FFF"/><rect x="573" y="259" width="7" height="1" fill="#D8E0A8"/><rect x="580" y="259" width="13" height="7" fill="#FFF"/><rect x="580" y="264" width="13" height="1" fill="#D8E0A8"/><rect x="593" y="259" width="12" height="7" fill="#FFF"/><rect x="605" y="259" width="7" height="9" fill="#FFF"/><rect x="612" y="257" width="6" height="11" fill="#FFF"/><rect x="612" y="260" width="6" height="1" fill="#D8E0A8"/><rect x="618" y="257" width="14" height="10" fill="#FFF"/><rect x="618" y="263" width="14" height="1" fill="#D8E0A8"/><rect x="632" y="259" width="8" height="9" fill="#FFF"/><rect x="640" y="257" width="12" height="9" fill="#FFF"/><rect x="640" y="264" width="12" height="1" fill="#D8E0A8"/><rect x="652" y="258" width="9" height="8" fill="#FFF"/><rect x="661" y="259" width="6" height="8" fill="#FFF"/><rect x="661" y="262" width="6" height="1" fill="#D8E0A8"/><rect x="667" y="258" width="13" height="10" fill="#FFF"/><rect x="667" y="260" width="13" height="1" fill="#D8E0A8"/><rect x="680" y="257" width="11" height="10" fill="#FFF"/><rect x="680" y="259" width="11" height="1" fill="#D8E0A8"/><rect x="691" y="257" width="5" height="11" fill="#FFF"/><rect x="696" y="258" width="5" height="9" fill="#FFF"/><rect x="701" y="258" width="11" height="10" fill="#FFF"/><rect x="701" y="261" width="11" height="1" fill="#D8E0A8"/><rect x="712" y="258" width="9" height="10" fill="#FFF"/><rect x="712" y="260" width="9" height="1" fill="#D8E0A8"/><rect x="721" y="257" width="11" height="11" fill="#FFF"/><rect x="721" y="259" width="11" height="1" fill="#D8E0A8"/><rect x="732" y="257" width="5" height="10" fill="#FFF"/><rect x="737" y="259" width="7" height="7" fill="#FFF"/><rect x="737" y="265" width="7" height="1" fill="#D8E0A8"/><rect x="744" y="259" width="8" height="9" fill="#FFF"/><rect x="744" y="264" width="8" height="1" fill="#D8E0A8"/><rect x="752" y="258" width="6" height="9" fill="#FFF"/><rect x="758" y="258" width="5" height="8" fill="#FFF"/><rect x="758" y="260" width="5" height="1" fill="#D8E0A8"/><rect x="763" y="257" width="8" height="10" fill="#FFF"/><rect x="771" y="259" width="14" height="7" fill="#FFF"/><rect x="771" y="262" width="14" height="1" fill="#D8E0A8"/><rect x="785" y="258" width="8" height="9" fill="#FFF"/><rect x="785" y="264" width="8" height="1" fill="#D8E0A8"/><rect x="793" y="258" width="10" height="9" fill="#FFF"/><rect x="793" y="260" width="10" height="1" fill="#D8E0A8"/><rect x="803" y="259" width="8" height="7" fill="#FFF"/><rect x="803" y="265" width="8" height="1" fill="#D8E0A8"/><rect x="811" y="258" width="10" height="8" fill="#FFF"/><rect x="811" y="264" width="10" height="1" fill="#D8E0A8"/><rect x="821" y="259" width="12" height="9" fill="#FFF"/><rect x="833" y="259" width="7" height="9" fill="#FFF"/><rect x="833" y="262" width="7" height="1" fill="#D8E0A8"/><rect x="840" y="257" width="14" height="9" fill="#FFF"/><rect x="840" y="264" width="14" height="1" fill="#D8E0A8"/><rect x="854" y="257" width="13" height="9" fill="#FFF"/><rect x="867" y="259" width="12" height="9" fill="#FFF"/><rect x="867" y="261" width="12" height="1" fill="#D8E0A8"/><rect x="879" y="257" width="6" height="9" fill="#FFF"/><rect x="885" y="259" width="8" height="7" fill="#FFF"/><rect x="885" y="264" width="8" height="1" fill="#D8E0A8"/><rect x="893" y="258" width="14" height="9" fill="#FFF"/><rect x="893" y="265" width="14" height="1" fill="#D8E0A8"/><rect x="907" y="257" width="6" height="11" fill="#FFF"/><rect x="907" y="264" width="6" height="1" fill="#D8E0A8"/><rect x="913" y="259" width="14" height="9" fill="#FFF"/><rect x="913" y="262" width="14" height="1" fill="#D8E0A8"/><rect x="927" y="257" width="5" height="10" fill="#FFF"/><rect x="927" y="260" width="5" height="1" fill="#D8E0A8"/><rect x="932" y="257" width="5" height="11" fill="#FFF"/><rect x="932" y="263" width="5" height="1" fill="#D8E0A8"/><rect x="937" y="257" width="14" height="11" fill="#FFF"/><rect x="937" y="262" width="14" height="1" fill="#D8E0A8"/><rect x="951" y="259" width="10" height="7" fill="#FFF"/><rect x="961" y="257" width="14" height="9" fill="#FFF"/><rect x="961" y="259" width="14" height="1" fill="#D8E0A8"/><rect x="975" y="258" width="12" height="8" fill="#FFF"/><rect x="975" y="260" width="12" height="1" fill="#D8E0A8"/><rect x="987" y="259" width="5" height="7" fill="#FFF"/><rect x="987" y="261" width="5" height="1" fill="#D8E0A8"/><rect x="992" y="258" width="9" height="10" fill="#FFF"/><rect x="1001" y="258" width="6" height="8" fill="#FFF"/><rect x="1001" y="260" width="6" height="1" fill="#D8E0A8"/><rect x="1007" y="258" width="7" height="9" fill="#FFF"/><rect x="1007" y="263" width="7" height="1" fill="#D8E0A8"/><rect x="1014" y="258" width="6" height="10" fill="#FFF"/><rect x="1020" y="257" width="14" height="9" fill="#FFF"/><rect x="1034" y="259" width="11" height="9" fill="#FFF"/><rect x="1045" y="257" width="6" height="9" fill="#FFF"/><rect x="1045" y="261" width="6" height="1" fill="#D8E0A8"/><rect x="1051" y="259" width="11" height="8" fill="#FFF"/><rect x="1051" y="266" width="11" height="1" fill="#D8E0A8"/><rect x="1062" y="258" width="14" height="9" fill="#FFF"/><rect x="1062" y="264" width="14" height="1" fill="#D8E0A8"/><rect x="1076" y="259" width="6" height="7" fill="#FFF"/><rect x="1076" y="265" width="6" height="1" fill="#D8E0A8"/><rect x="1082" y="258" width="6" height="10" fill="#FFF"/><rect x="1082" y="265" width="6" height="1" fill="#D8E0A8"/><rect x="1088" y="258" width="6" height="8" fill="#FFF"/><rect x="1094" y="258" width="12" height="10" fill="#FFF"/><rect x="1094" y="261" width="12" height="1" fill="#D8E0A8"/><rect x="1106" y="257" width="14" height="9" fill="#FFF"/><rect x="1106" y="261" width="14" height="1" fill="#D8E0A8"/><rect x="1120" y="258" width="12" height="10" fill="#FFF"/><rect x="1120" y="265" width="12" height="1" fill="#D8E0A8"/><rect x="1132" y="257" width="9" height="9" fill="#FFF"/><rect x="1132" y="260" width="9" height="1" fill="#D8E0A8"/><rect x="1141" y="258" width="8" height="10" fill="#FFF"/><rect x="1141" y="262" width="8" height="1" fill="#D8E0A8"/><rect x="1149" y="257" width="8" height="11" fill="#FFF"/><rect x="1149" y="259" width="8" height="1" fill="#D8E0A8"/><rect x="1157" y="258" width="6" height="10" fill="#FFF"/><rect x="1157" y="263" width="6" height="1" fill="#D8E0A8"/><rect x="1163" y="257" width="9" height="10" fill="#FFF"/><rect x="1163" y="263" width="9" height="1" fill="#D8E0A8"/><rect x="1172" y="259" width="12" height="8" fill="#FFF"/><rect x="1184" y="258" width="8" height="9" fill="#FFF"/><rect x="1184" y="260" width="8" height="1" fill="#D8E0A8"/><rect x="555" y="285" width="1.5" height="3" fill="#FFF"/><rect x="562" y="284" width="1.5" height="2" fill="#FFF"/><rect x="565.5" y="285.5" width="1.5" height="2" fill="#FFF"/><rect x="572" y="284" width="1.5" height="2" fill="#FFF"/><rect x="575.5" y="285.5" width="1.5" height="2" fill="#FFF"/><rect x="580" y="283" width="2.5" height="2" fill="#FFF"/><rect x="584" y="285" width="1.5" height="3" fill="#FFF"/><rect x="586.5" y="286.5" width="1.5" height="2" fill="#FFF"/><rect x="589" y="285" width="1.5" height="3" fill="#FFF"/><rect x="592" y="283" width="1.5" height="2" fill="#FFF"/><rect x="595" y="285" width="1.5" height="3" fill="#FFF"/><rect x="602" y="284" width="1.5" height="2" fill="#FFF"/><rect x="605.5" y="285.5" width="1.5" height="2" fill="#FFF"/><rect x="612" y="284" width="1.5" height="2" fill="#FFF"/><rect x="615.5" y="285.5" width="1.5" height="2" fill="#FFF"/><rect x="620" y="283" width="2.5" height="2" fill="#FFF"/><rect x="624" y="285" width="1.5" height="3" fill="#FFF"/><rect x="626.5" y="286.5" width="1.5" height="2" fill="#FFF"/><rect x="629" y="285" width="1.5" height="3" fill="#FFF"/><rect x="632" y="283" width="1.5" height="2" fill="#FFF"/><rect x="635" y="285" width="1.5" height="3" fill="#FFF"/><rect x="642" y="284" width="1.5" height="2" fill="#FFF"/><rect x="645.5" y="285.5" width="1.5" height="2" fill="#FFF"/><rect x="652" y="284" width="1.5" height="2" fill="#FFF"/><rect x="655.5" y="285.5" width="1.5" height="2" fill="#FFF"/><rect x="660" y="283" width="2.5" height="2" fill="#FFF"/><rect x="664" y="285" width="1.5" height="3" fill="#FFF"/><rect x="666.5" y="286.5" width="1.5" height="2" fill="#FFF"/><rect x="669" y="285" width="1.5" height="3" fill="#FFF"/><rect x="672" y="283" width="1.5" height="2" fill="#FFF"/><rect x="675" y="285" width="1.5" height="3" fill="#FFF"/><rect x="682" y="284" width="1.5" height="2" fill="#FFF"/><rect x="685.5" y="285.5" width="1.5" height="2" fill="#FFF"/><rect x="692" y="284" width="1.5" height="2" fill="#FFF"/><rect x="695.5" y="285.5" width="1.5" height="2" fill="#FFF"/><rect x="700" y="283" width="2.5" height="2" fill="#FFF"/><rect x="704" y="285" width="1.5" height="3" fill="#FFF"/><rect x="706.5" y="286.5" width="1.5" height="2" fill="#FFF"/><rect x="709" y="285" width="1.5" height="3" fill="#FFF"/><rect x="712" y="283" width="1.5" height="2" fill="#FFF"/><rect x="715" y="285" width="1.5" height="3" fill="#FFF"/><rect x="722" y="284" width="1.5" height="2" fill="#FFF"/><rect x="725.5" y="285.5" width="1.5" height="2" fill="#FFF"/><rect x="732" y="284" width="1.5" height="2" fill="#FFF"/><rect x="735.5" y="285.5" width="1.5" height="2" fill="#FFF"/><rect x="740" y="283" width="2.5" height="2" fill="#FFF"/><rect x="744" y="285" width="1.5" height="3" fill="#FFF"/><rect x="746.5" y="286.5" width="1.5" height="2" fill="#FFF"/><rect x="749" y="285" width="1.5" height="3" fill="#FFF"/><rect x="752" y="283" width="1.5" height="2" fill="#FFF"/><rect x="755" y="285" width="1.5" height="3" fill="#FFF"/><rect x="762" y="284" width="1.5" height="2" fill="#FFF"/><rect x="765.5" y="285.5" width="1.5" height="2" fill="#FFF"/><rect x="772" y="284" width="1.5" height="2" fill="#FFF"/><rect x="775.5" y="285.5" width="1.5" height="2" fill="#FFF"/><rect x="780" y="283" width="2.5" height="2" fill="#FFF"/><rect x="784" y="285" width="1.5" height="3" fill="#FFF"/><rect x="786.5" y="286.5" width="1.5" height="2" fill="#FFF"/><rect x="789" y="285" width="1.5" height="3" fill="#FFF"/><rect x="792" y="283" width="1.5" height="2" fill="#FFF"/><rect x="795" y="285" width="1.5" height="3" fill="#FFF"/><rect x="802" y="284" width="1.5" height="2" fill="#FFF"/><rect x="805.5" y="285.5" width="1.5" height="2" fill="#FFF"/><rect x="812" y="284" width="1.5" height="2" fill="#FFF"/><rect x="815.5" y="285.5" width="1.5" height="2" fill="#FFF"/><rect x="820" y="283" width="2.5" height="2" fill="#FFF"/><rect x="824" y="285" width="1.5" height="3" fill="#FFF"/><rect x="826.5" y="286.5" width="1.5" height="2" fill="#FFF"/><rect x="829" y="285" width="1.5" height="3" fill="#FFF"/><rect x="832" y="283" width="1.5" height="2" fill="#FFF"/><rect x="835" y="285" width="1.5" height="3" fill="#FFF"/><rect x="842" y="284" width="1.5" height="2" fill="#FFF"/><rect x="845.5" y="285.5" width="1.5" height="2" fill="#FFF"/><rect x="852" y="284" width="1.5" height="2" fill="#FFF"/><rect x="855.5" y="285.5" width="1.5" height="2" fill="#FFF"/><rect x="860" y="283" width="2.5" height="2" fill="#FFF"/><rect x="864" y="285" width="1.5" height="3" fill="#FFF"/><rect x="866.5" y="286.5" width="1.5" height="2" fill="#FFF"/><rect x="869" y="285" width="1.5" height="3" fill="#FFF"/><rect x="872" y="283" width="1.5" height="2" fill="#FFF"/><rect x="875" y="285" width="1.5" height="3" fill="#FFF"/><rect x="882" y="284" width="1.5" height="2" fill="#FFF"/><rect x="885.5" y="285.5" width="1.5" height="2" fill="#FFF"/><rect x="892" y="284" width="1.5" height="2" fill="#FFF"/><rect x="895.5" y="285.5" width="1.5" height="2" fill="#FFF"/><rect x="900" y="283" width="2.5" height="2" fill="#FFF"/><rect x="904" y="285" width="1.5" height="3" fill="#FFF"/><rect x="906.5" y="286.5" width="1.5" height="2" fill="#FFF"/><rect x="909" y="285" width="1.5" height="3" fill="#FFF"/><rect x="912" y="283" width="1.5" height="2" fill="#FFF"/><rect x="915" y="285" width="1.5" height="3" fill="#FFF"/><rect x="922" y="284" width="1.5" height="2" fill="#FFF"/><rect x="925.5" y="285.5" width="1.5" height="2" fill="#FFF"/><rect x="932" y="284" width="1.5" height="2" fill="#FFF"/><rect x="935.5" y="285.5" width="1.5" height="2" fill="#FFF"/><rect x="940" y="283" width="2.5" height="2" fill="#FFF"/><rect x="944" y="285" width="1.5" height="3" fill="#FFF"/><rect x="946.5" y="286.5" width="1.5" height="2" fill="#FFF"/><rect x="949" y="285" width="1.5" height="3" fill="#FFF"/><rect x="952" y="283" width="1.5" height="2" fill="#FFF"/><rect x="955" y="285" width="1.5" height="3" fill="#FFF"/><rect x="962" y="284" width="1.5" height="2" fill="#FFF"/><rect x="965.5" y="285.5" width="1.5" height="2" fill="#FFF"/><rect x="972" y="284" width="1.5" height="2" fill="#FFF"/><rect x="975.5" y="285.5" width="1.5" height="2" fill="#FFF"/><rect x="980" y="283" width="2.5" height="2" fill="#FFF"/><rect x="984" y="285" width="1.5" height="3" fill="#FFF"/><rect x="986.5" y="286.5" width="1.5" height="2" fill="#FFF"/><rect x="989" y="285" width="1.5" height="3" fill="#FFF"/><rect x="992" y="283" width="1.5" height="2" fill="#FFF"/><rect x="995" y="285" width="1.5" height="3" fill="#FFF"/><rect x="1002" y="284" width="1.5" height="2" fill="#FFF"/><rect x="1005.5" y="285.5" width="1.5" height="2" fill="#FFF"/><rect x="1012" y="284" width="1.5" height="2" fill="#FFF"/><rect x="1015.5" y="285.5" width="1.5" height="2" fill="#FFF"/><rect x="1020" y="283" width="2.5" height="2" fill="#FFF"/><rect x="1024" y="285" width="1.5" height="3" fill="#FFF"/><rect x="1026.5" y="286.5" width="1.5" height="2" fill="#FFF"/><rect x="1029" y="285" width="1.5" height="3" fill="#FFF"/><rect x="1032" y="283" width="1.5" height="2" fill="#FFF"/><rect x="1035" y="285" width="1.5" height="3" fill="#FFF"/><rect x="1042" y="284" width="1.5" height="2" fill="#FFF"/><rect x="1045.5" y="285.5" width="1.5" height="2" fill="#FFF"/><rect x="1052" y="284" width="1.5" height="2" fill="#FFF"/><rect x="1055.5" y="285.5" width="1.5" height="2" fill="#FFF"/><rect x="1060" y="283" width="2.5" height="2" fill="#FFF"/><rect x="1064" y="285" width="1.5" height="3" fill="#FFF"/><rect x="1066.5" y="286.5" width="1.5" height="2" fill="#FFF"/><rect x="1069" y="285" width="1.5" height="3" fill="#FFF"/><rect x="1072" y="283" width="1.5" height="2" fill="#FFF"/><rect x="1075" y="285" width="1.5" height="3" fill="#FFF"/><rect x="1082" y="284" width="1.5" height="2" fill="#FFF"/><rect x="1085.5" y="285.5" width="1.5" height="2" fill="#FFF"/><rect x="1092" y="284" width="1.5" height="2" fill="#FFF"/><rect x="1095.5" y="285.5" width="1.5" height="2" fill="#FFF"/><rect x="1100" y="283" width="2.5" height="2" fill="#FFF"/><rect x="1104" y="285" width="1.5" height="3" fill="#FFF"/><rect x="1106.5" y="286.5" width="1.5" height="2" fill="#FFF"/><rect x="1109" y="285" width="1.5" height="3" fill="#FFF"/><rect x="1112" y="283" width="1.5" height="2" fill="#FFF"/><rect x="1115" y="285" width="1.5" height="3" fill="#FFF"/><rect x="1122" y="284" width="1.5" height="2" fill="#FFF"/><rect x="1125.5" y="285.5" width="1.5" height="2" fill="#FFF"/><rect x="1132" y="284" width="1.5" height="2" fill="#FFF"/><rect x="1135.5" y="285.5" width="1.5" height="2" fill="#FFF"/><rect x="1140" y="283" width="2.5" height="2" fill="#FFF"/><rect x="1144" y="285" width="1.5" height="3" fill="#FFF"/><rect x="1146.5" y="286.5" width="1.5" height="2" fill="#FFF"/><rect x="1149" y="285" width="1.5" height="3" fill="#FFF"/><rect x="1152" y="283" width="1.5" height="2" fill="#FFF"/><rect x="1155" y="285" width="1.5" height="3" fill="#FFF"/><rect x="1162" y="284" width="1.5" height="2" fill="#FFF"/><rect x="1165.5" y="285.5" width="1.5" height="2" fill="#FFF"/><rect x="1172" y="284" width="1.5" height="2" fill="#FFF"/><rect x="1175.5" y="285.5" width="1.5" height="2" fill="#FFF"/><rect x="1180" y="283" width="2.5" height="2" fill="#FFF"/><rect x="1184" y="285" width="1.5" height="3" fill="#FFF"/><rect x="1186.5" y="286.5" width="1.5" height="2" fill="#FFF"/><rect x="1189" y="285" width="1.5" height="3" fill="#FFF"/><rect x="600" y="306" width="2" height="2" fill="#FFF"/><rect x="610" y="306" width="2" height="2" fill="#FFF"/><rect x="620" y="306" width="8" height="2" fill="#FFF"/><rect x="630" y="306" width="2" height="2" fill="#FFF"/><rect x="640" y="306" width="2" height="2" fill="#FFF"/><rect x="650" y="306" width="2" height="2" fill="#FFF"/><rect x="660" y="306" width="8" height="2" fill="#FFF"/><rect x="670" y="306" width="2" height="2" fill="#FFF"/><rect x="680" y="306" width="2" height="2" fill="#FFF"/><rect x="690" y="306" width="2" height="2" fill="#FFF"/><rect x="700" y="306" width="8" height="2" fill="#FFF"/><rect x="710" y="306" width="2" height="2" fill="#FFF"/><rect x="720" y="306" width="2" height="2" fill="#FFF"/><rect x="730" y="306" width="2" height="2" fill="#FFF"/><rect x="740" y="306" width="8" height="2" fill="#FFF"/><rect x="750" y="306" width="2" height="2" fill="#FFF"/><rect x="760" y="306" width="2" height="2" fill="#FFF"/><rect x="770" y="306" width="2" height="2" fill="#FFF"/><rect x="780" y="306" width="8" height="2" fill="#FFF"/><rect x="790" y="306" width="2" height="2" fill="#FFF"/><rect x="800" y="306" width="2" height="2" fill="#FFF"/><rect x="810" y="306" width="2" height="2" fill="#FFF"/><rect x="820" y="306" width="8" height="2" fill="#FFF"/><rect x="830" y="306" width="2" height="2" fill="#FFF"/><rect x="840" y="306" width="2" height="2" fill="#FFF"/><rect x="850" y="306" width="2" height="2" fill="#FFF"/><rect x="860" y="306" width="8" height="2" fill="#FFF"/><rect x="870" y="306" width="2" height="2" fill="#FFF"/><rect x="880" y="306" width="2" height="2" fill="#FFF"/><rect x="890" y="306" width="2" height="2" fill="#FFF"/><rect x="900" y="306" width="8" height="2" fill="#FFF"/><rect x="910" y="306" width="2" height="2" fill="#FFF"/><rect x="920" y="306" width="2" height="2" fill="#FFF"/><rect x="930" y="306" width="2" height="2" fill="#FFF"/><rect x="940" y="306" width="8" height="2" fill="#FFF"/><rect x="950" y="306" width="2" height="2" fill="#FFF"/><rect x="960" y="306" width="2" height="2" fill="#FFF"/><rect x="970" y="306" width="2" height="2" fill="#FFF"/><rect x="980" y="306" width="8" height="2" fill="#FFF"/><rect x="990" y="306" width="2" height="2" fill="#FFF"/><rect x="1000" y="306" width="2" height="2" fill="#FFF"/><rect x="1010" y="306" width="2" height="2" fill="#FFF"/><rect x="1020" y="306" width="8" height="2" fill="#FFF"/><rect x="1030" y="306" width="2" height="2" fill="#FFF"/><rect x="1040" y="306" width="2" height="2" fill="#FFF"/><rect x="1050" y="306" width="2" height="2" fill="#FFF"/><rect x="1060" y="306" width="8" height="2" fill="#FFF"/><rect x="1070" y="306" width="2" height="2" fill="#FFF"/><rect x="1080" y="306" width="2" height="2" fill="#FFF"/><rect x="1090" y="306" width="2" height="2" fill="#FFF"/><rect x="1100" y="306" width="8" height="2" fill="#FFF"/><rect x="1110" y="306" width="2" height="2" fill="#FFF"/><rect x="1120" y="306" width="2" height="2" fill="#FFF"/><rect x="1130" y="306" width="2" height="2" fill="#FFF"/><rect x="1140" y="306" width="8" height="2" fill="#FFF"/><rect x="1150" y="306" width="2" height="2" fill="#FFF"/><rect x="1160" y="306" width="2" height="2" fill="#FFF"/><rect x="1170" y="306" width="2" height="2" fill="#FFF"/><rect x="1180" y="306" width="8" height="2" fill="#FFF"/><rect x="596.6" y="311.5" width="1.5" height="2" fill="#FFF"/><rect x="602" y="312.5" width="1.5" height="2" fill="#FFF"/><rect x="606.6" y="311.5" width="1.5" height="2" fill="#FFF"/><rect x="612" y="312.5" width="1.5" height="2" fill="#FFF"/><rect x="616.6" y="311.5" width="1.5" height="2" fill="#FFF"/><rect x="622" y="312.5" width="1.5" height="2" fill="#FFF"/><rect x="632" y="312.5" width="1.5" height="2" fill="#FFF"/><rect x="636.6" y="311.5" width="1.5" height="2" fill="#FFF"/><rect x="642" y="312.5" width="1.5" height="2" fill="#FFF"/><rect x="646.6" y="311.5" width="1.5" height="2" fill="#FFF"/><rect x="652" y="312.5" width="1.5" height="2" fill="#FFF"/><rect x="656.6" y="311.5" width="1.5" height="2" fill="#FFF"/><rect x="662" y="312.5" width="1.5" height="2" fill="#FFF"/><rect x="672" y="312.5" width="1.5" height="2" fill="#FFF"/><rect x="676.6" y="311.5" width="1.5" height="2" fill="#FFF"/><rect x="682" y="312.5" width="1.5" height="2" fill="#FFF"/><rect x="686.6" y="311.5" width="1.5" height="2" fill="#FFF"/><rect x="692" y="312.5" width="1.5" height="2" fill="#FFF"/><rect x="696.6" y="311.5" width="1.5" height="2" fill="#FFF"/><rect x="702" y="312.5" width="1.5" height="2" fill="#FFF"/><rect x="712" y="312.5" width="1.5" height="2" fill="#FFF"/><rect x="716.6" y="311.5" width="1.5" height="2" fill="#FFF"/><rect x="722" y="312.5" width="1.5" height="2" fill="#FFF"/><rect x="726.6" y="311.5" width="1.5" height="2" fill="#FFF"/><rect x="732" y="312.5" width="1.5" height="2" fill="#FFF"/><rect x="736.6" y="311.5" width="1.5" height="2" fill="#FFF"/><rect x="742" y="312.5" width="1.5" height="2" fill="#FFF"/><rect x="752" y="312.5" width="1.5" height="2" fill="#FFF"/><rect x="756.6" y="311.5" width="1.5" height="2" fill="#FFF"/><rect x="762" y="312.5" width="1.5" height="2" fill="#FFF"/><rect x="766.6" y="311.5" width="1.5" height="2" fill="#FFF"/><rect x="772" y="312.5" width="1.5" height="2" fill="#FFF"/><rect x="776.6" y="311.5" width="1.5" height="2" fill="#FFF"/><rect x="782" y="312.5" width="1.5" height="2" fill="#FFF"/><rect x="792" y="312.5" width="1.5" height="2" fill="#FFF"/><rect x="796.6" y="311.5" width="1.5" height="2" fill="#FFF"/><rect x="802" y="312.5" width="1.5" height="2" fill="#FFF"/><rect x="806.6" y="311.5" width="1.5" height="2" fill="#FFF"/><rect x="812" y="312.5" width="1.5" height="2" fill="#FFF"/><rect x="816.6" y="311.5" width="1.5" height="2" fill="#FFF"/><rect x="822" y="312.5" width="1.5" height="2" fill="#FFF"/><rect x="832" y="312.5" width="1.5" height="2" fill="#FFF"/><rect x="836.6" y="311.5" width="1.5" height="2" fill="#FFF"/><rect x="842" y="312.5" width="1.5" height="2" fill="#FFF"/><rect x="846.6" y="311.5" width="1.5" height="2" fill="#FFF"/><rect x="852" y="312.5" width="1.5" height="2" fill="#FFF"/><rect x="856.6" y="311.5" width="1.5" height="2" fill="#FFF"/><rect x="862" y="312.5" width="1.5" height="2" fill="#FFF"/><rect x="872" y="312.5" width="1.5" height="2" fill="#FFF"/><rect x="876.6" y="311.5" width="1.5" height="2" fill="#FFF"/><rect x="882" y="312.5" width="1.5" height="2" fill="#FFF"/><rect x="886.6" y="311.5" width="1.5" height="2" fill="#FFF"/><rect x="892" y="312.5" width="1.5" height="2" fill="#FFF"/><rect x="896.6" y="311.5" width="1.5" height="2" fill="#FFF"/><rect x="902" y="312.5" width="1.5" height="2" fill="#FFF"/><rect x="912" y="312.5" width="1.5" height="2" fill="#FFF"/><rect x="916.6" y="311.5" width="1.5" height="2" fill="#FFF"/><rect x="922" y="312.5" width="1.5" height="2" fill="#FFF"/><rect x="926.6" y="311.5" width="1.5" height="2" fill="#FFF"/><rect x="932" y="312.5" width="1.5" height="2" fill="#FFF"/><rect x="936.6" y="311.5" width="1.5" height="2" fill="#FFF"/><rect x="942" y="312.5" width="1.5" height="2" fill="#FFF"/><rect x="952" y="312.5" width="1.5" height="2" fill="#FFF"/><rect x="956.6" y="311.5" width="1.5" height="2" fill="#FFF"/><rect x="962" y="312.5" width="1.5" height="2" fill="#FFF"/><rect x="966.6" y="311.5" width="1.5" height="2" fill="#FFF"/><rect x="972" y="312.5" width="1.5" height="2" fill="#FFF"/><rect x="976.6" y="311.5" width="1.5" height="2" fill="#FFF"/><rect x="982" y="312.5" width="1.5" height="2" fill="#FFF"/><rect x="992" y="312.5" width="1.5" height="2" fill="#FFF"/><rect x="996.6" y="311.5" width="1.5" height="2" fill="#FFF"/><rect x="1002" y="312.5" width="1.5" height="2" fill="#FFF"/><rect x="1006.6" y="311.5" width="1.5" height="2" fill="#FFF"/><rect x="1012" y="312.5" width="1.5" height="2" fill="#FFF"/><rect x="1016.6" y="311.5" width="1.5" height="2" fill="#FFF"/><rect x="1022" y="312.5" width="1.5" height="2" fill="#FFF"/><rect x="1032" y="312.5" width="1.5" height="2" fill="#FFF"/><rect x="1036.6" y="311.5" width="1.5" height="2" fill="#FFF"/><rect x="1042" y="312.5" width="1.5" height="2" fill="#FFF"/><rect x="1046.6" y="311.5" width="1.5" height="2" fill="#FFF"/><rect x="1052" y="312.5" width="1.5" height="2" fill="#FFF"/><rect x="1056.6" y="311.5" width="1.5" height="2" fill="#FFF"/><rect x="1062" y="312.5" width="1.5" height="2" fill="#FFF"/><rect x="1072" y="312.5" width="1.5" height="2" fill="#FFF"/><rect x="1076.6" y="311.5" width="1.5" height="2" fill="#FFF"/><rect x="1082" y="312.5" width="1.5" height="2" fill="#FFF"/><rect x="1086.6" y="311.5" width="1.5" height="2" fill="#FFF"/><rect x="1092" y="312.5" width="1.5" height="2" fill="#FFF"/><rect x="1096.6" y="311.5" width="1.5" height="2" fill="#FFF"/><rect x="1102" y="312.5" width="1.5" height="2" fill="#FFF"/><rect x="1112" y="312.5" width="1.5" height="2" fill="#FFF"/><rect x="1116.6" y="311.5" width="1.5" height="2" fill="#FFF"/><rect x="1122" y="312.5" width="1.5" height="2" fill="#FFF"/><rect x="1126.6" y="311.5" width="1.5" height="2" fill="#FFF"/><rect x="1132" y="312.5" width="1.5" height="2" fill="#FFF"/><rect x="1136.6" y="311.5" width="1.5" height="2" fill="#FFF"/><rect x="1142" y="312.5" width="1.5" height="2" fill="#FFF"/><rect x="1152" y="312.5" width="1.5" height="2" fill="#FFF"/><rect x="1156.6" y="311.5" width="1.5" height="2" fill="#FFF"/><rect x="1162" y="312.5" width="1.5" height="2" fill="#FFF"/><rect x="1166.6" y="311.5" width="1.5" height="2" fill="#FFF"/><rect x="1172" y="312.5" width="1.5" height="2" fill="#FFF"/><rect x="1176.6" y="311.5" width="1.5" height="2" fill="#FFF"/><rect x="1182" y="312.5" width="1.5" height="2" fill="#FFF"/><rect x="640" y="336" width="1.5" height="2" fill="#FFF"/><rect x="650" y="336" width="1.5" height="2" fill="#FFF"/><rect x="660" y="336" width="1.5" height="2" fill="#FFF"/><rect x="680" y="336" width="1.5" height="2" fill="#FFF"/><rect x="690" y="336" width="1.5" height="2" fill="#FFF"/><rect x="700" y="336" width="1.5" height="2" fill="#FFF"/><rect x="720" y="336" width="1.5" height="2" fill="#FFF"/><rect x="730" y="336" width="1.5" height="2" fill="#FFF"/><rect x="740" y="336" width="1.5" height="2" fill="#FFF"/><rect x="760" y="336" width="1.5" height="2" fill="#FFF"/><rect x="770" y="336" width="1.5" height="2" fill="#FFF"/><rect x="780" y="336" width="1.5" height="2" fill="#FFF"/><rect x="800" y="336" width="1.5" height="2" fill="#FFF"/><rect x="810" y="336" width="1.5" height="2" fill="#FFF"/><rect x="820" y="336" width="1.5" height="2" fill="#FFF"/><rect x="840" y="336" width="1.5" height="2" fill="#FFF"/><rect x="850" y="336" width="1.5" height="2" fill="#FFF"/><rect x="860" y="336" width="1.5" height="2" fill="#FFF"/><rect x="880" y="336" width="1.5" height="2" fill="#FFF"/><rect x="890" y="336" width="1.5" height="2" fill="#FFF"/><rect x="900" y="336" width="1.5" height="2" fill="#FFF"/><rect x="920" y="336" width="1.5" height="2" fill="#FFF"/><rect x="930" y="336" width="1.5" height="2" fill="#FFF"/><rect x="940" y="336" width="1.5" height="2" fill="#FFF"/><rect x="960" y="336" width="1.5" height="2" fill="#FFF"/><rect x="970" y="336" width="1.5" height="2" fill="#FFF"/><rect x="980" y="336" width="1.5" height="2" fill="#FFF"/><rect x="1000" y="336" width="1.5" height="2" fill="#FFF"/><rect x="1010" y="336" width="1.5" height="2" fill="#FFF"/><rect x="1020" y="336" width="1.5" height="2" fill="#FFF"/><rect x="1040" y="336" width="1.5" height="2" fill="#FFF"/><rect x="1050" y="336" width="1.5" height="2" fill="#FFF"/><rect x="1060" y="336" width="1.5" height="2" fill="#FFF"/><rect x="1080" y="336" width="1.5" height="2" fill="#FFF"/><rect x="1090" y="336" width="1.5" height="2" fill="#FFF"/><rect x="1100" y="336" width="1.5" height="2" fill="#FFF"/><rect x="1120" y="336" width="1.5" height="2" fill="#FFF"/><rect x="1130" y="336" width="1.5" height="2" fill="#FFF"/><rect x="1140" y="336" width="1.5" height="2" fill="#FFF"/><rect x="1160" y="336" width="1.5" height="2" fill="#FFF"/><rect x="1170" y="336" width="1.5" height="2" fill="#FFF"/><rect x="1180" y="336" width="1.5" height="2" fill="#FFF"/><rect x="972" y="350" width="3" height="2" fill="#FFF"/><rect x="976" y="351" width="3" height="2" fill="#FFF"/><rect x="980" y="352" width="3" height="2" fill="#FFF"/><rect x="984" y="350" width="3" height="2" fill="#FFF"/><rect x="988" y="351" width="3" height="2" fill="#FFF"/><rect x="875" y="361" width="1.5" height="2" fill="#FFF"/><rect x="885" y="361" width="1.5" height="2" fill="#FFF"/><rect x="895" y="361" width="1.5" height="2" fill="#FFF"/><rect x="905" y="361" width="1.5" height="2" fill="#FFF"/><rect x="915" y="361" width="1.5" height="2" fill="#FFF"/><rect x="925" y="361" width="1.5" height="2" fill="#FFF"/><rect x="935" y="361" width="1.5" height="2" fill="#FFF"/><rect x="945" y="361" width="1.5" height="2" fill="#FFF"/><rect x="955" y="361" width="1.5" height="2" fill="#FFF"/><rect x="965" y="361" width="1.5" height="2" fill="#FFF"/><rect x="975" y="361" width="1.5" height="2" fill="#FFF"/><rect x="985" y="361" width="1.5" height="2" fill="#FFF"/></svg>
<div class="t" style="left:555px;top:133px;font-size:12px;font-weight:700;color:#000">theme</div>
<div class="t" style="left:595px;top:157px;font-size:12px;font-weight:700;color:#000">-3 -3 -2 -4 -4 -2 arp (copied)</div>
<div class="t" style="left:635px;top:181px;font-size:12px;font-weight:700;color:#000">sus top e (copied)</div>
<div class="t" style="left:715px;top:205px;font-size:12px;font-weight:700;color:#000">-4 arp top e (copied)</div>
<div class="t" style="left:555px;top:229px;font-size:12px;font-weight:700;color:#000">bass, #2</div>
<div class="t" style="left:555px;top:253px;font-size:12px;font-weight:700;color:#000">bass, transcribed</div>
<div class="t" style="left:555px;top:277px;font-size:12px;font-weight:700;color:#000">rhythm (cymbal) (copied)</div>
<div class="t" style="left:595px;top:300px;font-size:12px;font-weight:700;color:#000">rhythm (drums)</div>
<div class="t" style="left:635px;top:324px;font-size:12px;font-weight:700;color:#000">rhythm (claps) (copied)</div>
<div class="t" style="left:875px;top:348px;font-size:12px;font-weight:700;color:#000">PizzicatoStrings</div>
<div class="a" style="left:622px;top:126px;width:1px;height:362px;background:#1A1AA0"></div>
<div class="a" style="left:0;top:530px;width:1265px;height:35px;background:#EDECE6"></div>
<div class="a" style="left:311px;top:530px;width:954px;height:1px;background:#FFFFFF"></div>
<div class="a" style="left:2px;top:537px;width:1155px;height:24px;border:1px solid;border-color:#6E6C68 #FFFFFF #FFFFFF #6E6C68"></div>
<div class="t" style="left:12px;top:542px;font-size:14.5px;letter-spacing:0.3px">Ready.</div>
<div class="a" style="left:1160px;top:534px;width:102px;height:29px;border:2px solid;border-color:#57554F #FFFFFF #FFFFFF #57554F"></div>
<div class="t" style="left:1200px;top:542px;font-size:14px;font-weight:700">0%</div>
<div class="a" style="left:1248px;top:126px;width:15px;height:372px;background:linear-gradient(90deg,#E6E4DE,#FFFFFF 40%,#F4F2EC 80%,#D8D6D0)"></div>
<div class="a" style="left:1263px;top:126px;width:2px;height:404px;background:#EDECE6"></div>
<div class="a" style="left:1248px;top:126px;width:15px;height:16px;border:1px solid #A8A6A0;background:linear-gradient(90deg,#EEEDE7,#FFFFFF 50%,#E4E2DA)"></div>
<svg class="a" style="left:1251px;top:130px" width="9" height="9" viewBox="0 0 9 9"><path d="M4.5 0 L9 5 H6.5 V9 H2.5 V5 H0 Z" fill="#000"/></svg>
<div class="a" style="left:1248px;top:143px;width:15px;height:140px;border:1px solid #9C8C50;background:linear-gradient(90deg,#F0D890,#FCE8A0 45%,#E8CC70 85%,#C8A848)"></div>
<div class="a" style="left:1250px;top:206px;width:11px;height:14px;background:repeating-linear-gradient(#8C7C40 0 1px,#FCE8A0 1px 3px)"></div>
<div class="a" style="left:1248px;top:498px;width:15px;height:32px;border:1px solid #A8A6A0;border-left-color:#888;background:#EEEDE7"></div>
<svg class="a" style="left:1251px;top:502px" width="9" height="9" viewBox="0 0 9 9"><path d="M4.5 0 L9 5 H6.5 V9 H2.5 V5 H0 Z" fill="#000"/></svg>
<div class="a" style="left:1251px;top:514px;width:9px;height:1px;background:#000"></div>
<svg class="a" style="left:1251px;top:518px" width="9" height="9" viewBox="0 0 9 9"><path d="M4.5 9 L9 4 H6.5 V0 H2.5 V4 H0 Z" fill="#000"/></svg>
</body></html>
